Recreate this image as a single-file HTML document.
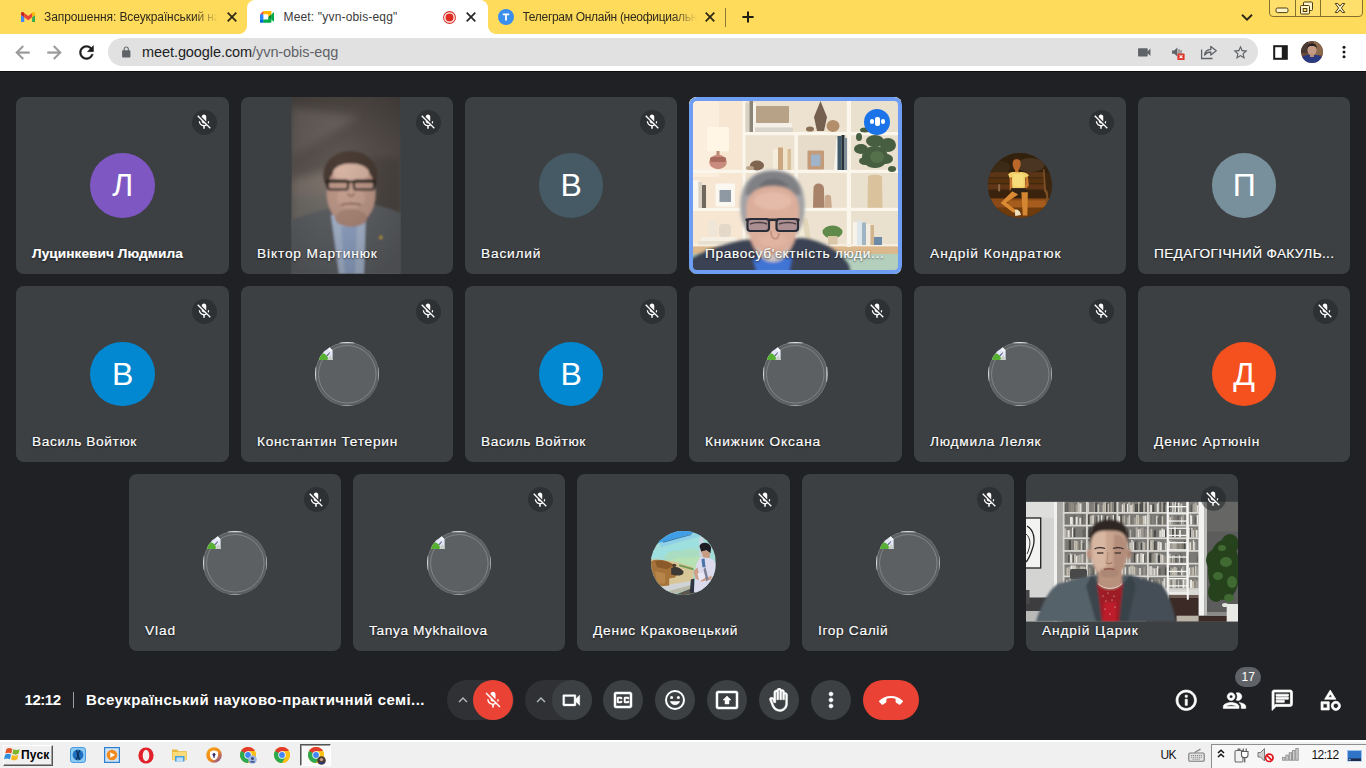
<!DOCTYPE html>
<html lang="uk">
<head>
<meta charset="utf-8">
<title>Meet: "yvn-obis-eqg"</title>
<style>
*{box-sizing:border-box;margin:0;padding:0}
html,body{width:1366px;height:768px;overflow:hidden;background:#202124;font-family:"Liberation Sans",sans-serif}
#root{position:relative;width:1366px;height:768px;overflow:hidden;background:#202124}
.abs{position:absolute}
svg{display:block}
/* browser chrome */
#tabstrip{position:absolute;left:0;top:0;width:1366px;height:34px;background:#ffdb5c}
#toolbar{position:absolute;left:0;top:34px;width:1366px;height:37px;background:#fff}
#tbline{position:absolute;left:0;top:70.500px;width:1366px;height:1.500px;background:#0e0f10}
.tabtxt{position:absolute;top:9px;height:16px;font-size:12px;color:#2e2a1c;white-space:nowrap;overflow:hidden;line-height:16px}
#activetab{position:absolute;left:247px;top:0;width:241px;height:34px;background:#fff;border-radius:8px 8px 0 0}
#activetab:before,#activetab:after{content:"";position:absolute;bottom:0;width:8px;height:8px}
#activetab:before{left:-8px;background:radial-gradient(circle at 0 0,rgba(255,255,255,0) 7.500px,#fff 8.200px)}
#activetab:after{right:-8px;background:radial-gradient(circle at 100% 0,rgba(255,255,255,0) 7.500px,#fff 8.200px)}
#urlbar{position:absolute;left:108px;top:38px;width:1150px;height:28px;border-radius:14px;background:#e1e1e1}
#url{position:absolute;left:142px;top:43px;font-size:14.500px;line-height:18px;color:#202124;white-space:nowrap}
#url span{color:#5f6368}
/* meet tiles */
.tile{position:absolute;width:212.330px;height:176.670px;background:#3c4043;border-radius:8px;overflow:hidden}
.tile.active{box-shadow:none}
.tile.active:after{content:"";position:absolute;left:0;top:0;right:0;bottom:0;border:4px solid #6e9ef3;border-radius:8px}
.name{position:absolute;left:16px;top:147.300px;font-size:13.700px;-webkit-text-stroke:.18px #fff;line-height:18px;color:#fff;white-space:nowrap;text-shadow:0 1px 2px rgba(0,0,0,.6),0 0 2px rgba(0,0,0,.3);z-index:3}
.mic{position:absolute;width:25px;height:25px;border-radius:12.500px;background:rgba(32,33,36,.5);z-index:3}
.mic svg{position:absolute;left:3.500px;top:3.500px;width:18px;height:18px}
.av{position:absolute;left:calc(50% - 32.100px);top:56.200px;width:64.600px;height:64.600px;border-radius:32.300px;color:#fff;font-size:32px;line-height:64.600px;text-align:center}
.ph,.pic{position:absolute;left:calc(50% - 32.100px);top:56.200px;width:64.600px;height:64.600px;border-radius:32.300px;overflow:hidden}
.ph svg,.pic svg{width:64.600px;height:64.600px}
.spk{position:absolute;right:12px;top:11.500px;width:26px;height:26px;border-radius:13px;background:#1a73e8;z-index:3}
.spk i{position:absolute;top:9.500px;width:4px;height:7px;border-radius:2px;background:#fff}
.spk i:nth-child(1){left:5.500px;top:10.500px;height:5px}
.spk i:nth-child(2){left:11px;top:8.500px;height:9px;width:4.500px}
.spk i:nth-child(3){left:17px;top:10.500px;height:5px}
/* bottom bar */
#clock,#mtitle{font-size:15px;line-height:20px;color:#fff;white-space:nowrap;font-weight:700}
/* taskbar */
#task{position:absolute;left:0;top:740px;width:1366px;height:28px;background:#f0f0f0}

</style>
</head>
<body>
<div id="root">
<!-- browser chrome -->

<div id="tabstrip"></div>
<div id="activetab"></div>
<div id="toolbar"></div>
<div id="tbline"></div>
<svg class="abs" style="left:20.800px;top:11.600px;width:14.400px;height:10.800px" viewBox="52 42 88 66">
<path fill="#4285f4" d="M58 108h14V74L52 59v43c0 3.320 2.690 6 6 6"/>
<path fill="#34a853" d="M120 108h14c3.320 0 6-2.690 6-6V59l-20 15"/>
<path fill="#fbbc04" d="M120 48v26l20-15v-8c0-7.420-8.470-11.650-14.400-7.200"/>
<path fill="#ea4335" d="M72 74V48l24 18 24-18v26L96 92"/>
<path fill="#c5221f" d="M52 51v8l20 15V48l-5.600-4.200c-5.940-4.450-14.400-.220-14.400 7.200"/>
</svg>
<div class="tabtxt" id="tab1" style="left:44px;width:174px;letter-spacing:-0.092px;-webkit-mask-image:linear-gradient(90deg,#000 150px,transparent 174px);mask-image:linear-gradient(90deg,#000 150px,transparent 174px)">Запрошення: Всеукраїнський науково</div>
<svg class="abs" style="left:226.4px;top:11px;width:12px;height:12px" viewBox="-6 -6 12 12"><path d="M-4.3 -4.3L4.3 4.3M4.3 -4.3L-4.3 4.3" stroke="#2b2616" stroke-width="1.7" fill="none"/></svg>
<svg class="abs" style="left:260px;top:11.200px;width:14.400px;height:11.800px" viewBox="0 0 87.500 72">
<path fill="#00832d" d="M49.500 36l8.530 9.750 11.470 7.330 2-17.020-2-16.640-11.690 6.440z"/>
<path fill="#0066da" d="M0 51.500V66c0 3.315 2.685 6 6 6h14.500l3-10.960-3-9.540-9.950-3z"/>
<path fill="#e94235" d="M20.500 0L0 20.500l10.550 3 9.950-3 2.950-9.410z"/>
<path fill="#2684fc" d="M20.500 20.500H0v31h20.500z"/>
<path fill="#00ac47" d="M82.600 8.680L69.500 19.420v33.660l13.160 10.790c1.970 1.540 4.850.135 4.850-2.370V11c0-2.535-2.945-3.925-4.910-2.320zM49.500 36v15.500h-29V72h43c3.315 0 6-2.685 6-6V53.080z"/>
<path fill="#ffba00" d="M63.500 0h-43v20.500h29V36l20-16.570V6c0-3.315-2.685-6-6-6z"/>
</svg>
<div class="tabtxt" id="tab2" style="left:283.500px;color:#3a3a3a;letter-spacing:0.170px;">Meet: "yvn-obis-eqg"</div>
<svg class="abs" style="left:442.800px;top:10.500px;width:13px;height:13px" viewBox="-6.500 -6.500 13 13"><circle r="5.900" fill="#fff" stroke="#d93025" stroke-width="1.100"/><circle r="4" fill="#e02a20"/></svg>
<svg class="abs" style="left:465.4px;top:11px;width:12px;height:12px" viewBox="-6 -6 12 12"><path d="M-4.3 -4.3L4.3 4.3M4.3 -4.3L-4.3 4.3" stroke="#262626" stroke-width="1.7" fill="none"/></svg>
<svg class="abs" style="left:498px;top:9px;width:16px;height:16px" viewBox="0 0 16 16"><circle cx="8" cy="8" r="8" fill="#3a8eed"/><path d="M4.800 4.600h6.400v1.700H8.900v5.300H7.100V6.300H4.800z" fill="#fff"/></svg>
<div class="tabtxt" id="tab3" style="left:522.500px;width:174px;letter-spacing:-0.300px;-webkit-mask-image:linear-gradient(90deg,#000 150px,transparent 174px);mask-image:linear-gradient(90deg,#000 150px,transparent 174px)">Телеграм Онлайн (неофициальный</div>
<svg class="abs" style="left:704px;top:11px;width:12px;height:12px" viewBox="-6 -6 12 12"><path d="M-4.3 -4.3L4.3 4.3M4.3 -4.3L-4.3 4.3" stroke="#2b2616" stroke-width="1.7" fill="none"/></svg>
<div class="abs" style="left:725px;top:8px;width:1px;height:19px;background:#8c7a3a"></div>
<svg class="abs" style="left:741px;top:10px;width:14px;height:14px" viewBox="-7 -7 14 14"><path d="M-5.600 0H5.600M0 -5.600V5.600" stroke="#1f1c12" stroke-width="2" fill="none"/></svg>
<svg class="abs" style="left:1240px;top:12px;width:14px;height:10px" viewBox="0 0 14 10"><path d="M2 2.800L7 7.600L12 2.800" stroke="#2b2616" stroke-width="1.900" fill="none"/></svg>
<!-- window controls -->
<div class="abs" style="left:1269px;top:-3px;width:93.500px;height:20px;border:1px solid #84702b;border-radius:0 0 4px 4px;background:#ffdf6b"></div>
<div class="abs" style="left:1294.500px;top:0;width:1px;height:16px;background:#84702b"></div>
<div class="abs" style="left:1319.500px;top:0;width:1px;height:16px;background:#84702b"></div>
<svg class="abs" style="left:1275px;top:7px;width:14px;height:7px" viewBox="0 0 14 7"><rect x="1" y="1" width="12" height="4.600" rx="1.600" fill="#fff4c8" stroke="#4a3e12" stroke-width="1"/></svg>
<svg class="abs" style="left:1299px;top:1px;width:15px;height:14px" viewBox="0 0 15 14"><rect x="4.500" y="1" width="9" height="8.500" rx="1" fill="#fff4c8" stroke="#4a3e12" stroke-width="1"/><rect x="1.500" y="4.500" width="9" height="8.500" rx="1" fill="#fff4c8" stroke="#4a3e12" stroke-width="1"/><rect x="4.200" y="7.500" width="3.600" height="3" fill="#ffdf6b" stroke="#4a3e12" stroke-width="1"/></svg>
<svg class="abs" style="left:1333px;top:2px;width:14px;height:12px" viewBox="0 0 14 12"><path d="M2.200 1.500h2.600L7 4.200 9.200 1.500h2.600L8.400 6l3.400 4.500H9.200L7 7.800 4.800 10.500H2.200L5.600 6z" fill="#fff4c8" stroke="#4a3e12" stroke-width="1" stroke-linejoin="round"/></svg>
<!-- toolbar -->
<svg class="abs" style="left:11.50px;top:41.50px;width:21px;height:21px" viewBox="0 0 24 24"><path fill="#9b9b9b" d="M20 11H7.83l5.59-5.59L12 4l-8 8 8 8 1.41-1.41L7.83 13H20v-2z" stroke="#9b9b9b" stroke-width=".5"/></svg>
<svg class="abs" style="left:43.500px;top:41.500px;width:21px;height:21px;transform:scaleX(-1)" viewBox="0 0 24 24"><path fill="#9b9b9b" stroke="#9b9b9b" stroke-width=".5" d="M20 11H7.83l5.59-5.59L12 4l-8 8 8 8 1.41-1.41L7.83 13H20v-2z"/></svg>
<svg class="abs" style="left:75.50px;top:41.50px;width:21px;height:21px" viewBox="0 0 24 24"><path fill="#1b1b1b" d="M17.65 6.35C16.2 4.9 14.21 4 12 4c-4.42 0-7.99 3.58-7.99 8s3.57 8 7.99 8c3.73 0 6.84-2.55 7.73-6h-2.080c-.82 2.330-3.040 4-5.650 4-3.310 0-6-2.690-6-6s2.690-6 6-6c1.660 0 3.140.690 4.220 1.780L13 11h7V4l-2.350 2.350z" stroke="#1b1b1b" stroke-width=".5"/></svg>
<div id="urlbar"></div>
<svg class="abs" style="left:120.45px;top:45.55px;width:12.5px;height:12.5px" viewBox="0 0 24 24"><path fill="#5f6368" d="M18 8h-1V6c0-2.760-2.240-5-5-5S7 3.240 7 6v2H6c-1.100 0-2 .9-2 2v10c0 1.100.9 2 2 2h12c1.100 0 2-.9 2-2V10c0-1.100-.9-2-2-2zM9 6c0-1.660 1.340-3 3-3s3 1.340 3 3v2H9V6z" /></svg>
<div id="url" style="letter-spacing:-0.077px;">meet.google.com<span>/yvn-obis-eqg</span></div>
<svg class="abs" style="left:1135.95px;top:43.95px;width:16.5px;height:16.5px" viewBox="0 0 24 24"><path fill="#5f6368" d="M17 10.5V7c0-.55-.45-1-1-1H4c-.55 0-1 .45-1 1v10c0 .55.45 1 1 1h12c.55 0 1-.45 1-1v-3.5l4 4v-11l-4 4z" /></svg>
<svg class="abs" style="left:1170px;top:44px;width:16px;height:17px" viewBox="0 0 16 17"><path d="M2 6.500h2.200L7.400 3.600v9L4.200 9.800H2z" fill="#5f6368"/><path d="M9 5.200v6.400M11 6v5" stroke="#5f6368" stroke-width="1" fill="none"/><rect x="7.400" y="9.600" width="7.200" height="6.400" rx=".6" fill="#e0382c"/><path d="M9.600 11.400l2.800 2.800M12.400 11.400l-2.800 2.800" stroke="#fff" stroke-width="1.100"/></svg>
<svg class="abs" style="left:1200px;top:44px;width:18px;height:16px" viewBox="0 0 18 16"><path d="M1.600 5.500V14.500H12.500" stroke="#5f6368" stroke-width="1.300" fill="none"/><path d="M4.500 11C5 7.400 7.600 5.600 10.800 5.400V2.400L16.300 6.700 10.800 11V8C8.400 8 6.200 8.800 4.500 11Z" stroke="#5f6368" stroke-width="1.300" fill="none" stroke-linejoin="round"/></svg>
<svg class="abs" style="left:1231.50px;top:43.50px;width:17px;height:17px" viewBox="0 0 24 24"><path fill="#5f6368" d="M22 9.24l-7.19-.62L12 2 9.19 8.63 2 9.240l5.460 4.730L5.820 21 12 17.270 18.180 21l-1.630-7.030L22 9.240zM12 15.400l-3.760 2.270 1-4.280-3.320-2.880 4.380-.380L12 6.100l1.710 4.040 4.380.380-3.320 2.880 1 4.280L12 15.400z" /></svg>
<svg class="abs" style="left:1272.500px;top:44.500px;width:15px;height:15px" viewBox="0 0 15 15"><rect x="1.200" y="1.200" width="12.600" height="12.600" fill="#fff" stroke="#1b1b1b" stroke-width="2"/><rect x="8.800" y="1" width="5.200" height="13" fill="#1b1b1b"/></svg>
<svg class="abs" style="left:1301px;top:41px;width:22px;height:22px" viewBox="0 0 22 22"><defs><clipPath id="pfc"><circle cx="11" cy="11" r="11"/></clipPath></defs><g clip-path="url(#pfc)"><rect width="22" height="22" fill="#6a4a3a"/><rect x="13" y="0" width="9" height="14" fill="#8a6a4a"/><rect x="0" y="0" width="7" height="12" fill="#4a3a34"/><path d="M0 22V17C3 14 7 13.500 11 13.500S19 14 22 17V22Z" fill="#2b3b82"/><ellipse cx="11" cy="9" rx="4.600" ry="5.600" fill="#c59b86"/><path d="M6.200 8C6 3.500 8.500 2.500 11 2.500S16 3.500 15.800 8C15 5.500 13.500 5 11 5S7 5.500 6.200 8Z" fill="#2a211e"/><rect x="9" y="13" width="4" height="3" fill="#b98f7a"/></g></svg>
<svg class="abs" style="left:1340px;top:44px;width:8px;height:16px" viewBox="0 0 8 16"><circle cx="4" cy="3.300" r="1.500" fill="#1b1b1b"/><circle cx="4" cy="8" r="1.500" fill="#1b1b1b"/><circle cx="4" cy="12.700" r="1.500" fill="#1b1b1b"/></svg>

<!-- tiles -->
<div class="tile " style="left:16px;top:97.00px;width:213px"><div class="av" style="background:#7e57c2;font-size:32px"><span style="position:relative;top:0px">Л</span></div><div class="mic" style="right:12.500px;top:12.9px"><svg viewBox="0 0 24 24"><path fill="#fff" d="M19 11h-1.7c0 .74-.16 1.43-.43 2.05l1.23 1.23c.56-.98.9-2.090.9-3.280zm-4.020.170c0-.060.020-.110.020-.170V5c0-1.660-1.340-3-3-3S9 3.340 9 5v.180l5.980 5.990zM4.270 3L3 4.270l6.010 6.010V11c0 1.660 1.330 3 2.990 3 .220 0 .440-.030.650-.080l1.660 1.660c-.710.330-1.500.520-2.310.520-2.760 0-5.300-2.100-5.300-5.100H5c0 3.410 2.720 6.230 6 6.720V21h2v-3.280c.910-.130 1.770-.450 2.540-.9L19.730 21 21 19.730 4.270 3z"/></svg></div><div class="name" id="n_r1c1" style="top:148px;letter-spacing:0.046px;font-weight:700;">Луцинкевич Людмила</div></div>
<div class="tile " style="left:241px;top:97.00px;width:212px"><svg class="abs" style="left:-.800px;top:0" width="212.330" height="176.670" viewBox="0 0 212.330 176.670">
<defs>
<filter id="bl1" x="-10%" y="-10%" width="120%" height="120%"><feGaussianBlur stdDeviation="1.100"/></filter>
<filter id="bl1b" x="-10%" y="-10%" width="120%" height="120%"><feGaussianBlur stdDeviation="4"/></filter>
<clipPath id="cpv"><rect x="51.600" y="0" width="108.800" height="176.670"/></clipPath>
<linearGradient id="vbg" x1="0" y1="0" x2="0" y2="1"><stop offset="0" stop-color="#4f4945"/><stop offset=".45" stop-color="#625a55"/><stop offset="1" stop-color="#6a625d"/></linearGradient>
<radialGradient id="vvig" cx=".45" cy=".35" r=".75"><stop offset="0" stop-color="#000" stop-opacity="0"/><stop offset="1" stop-color="#000" stop-opacity=".25"/></radialGradient>
</defs>
<g clip-path="url(#cpv)">
<rect x="51.600" y="0" width="108.800" height="176.670" fill="url(#vbg)"/>
<g filter="url(#bl1b)">
<path d="M51 83 L100 70 L100 130 L51 130 Z" fill="#82776f"/>
<path d="M51 60 L120 20 L51 10 Z" fill="#6b635e"/>
<rect x="51" y="98" width="42" height="26" fill="#77736e"/>
<rect x="130" y="60" width="32" height="60" fill="#514b47"/>
</g>
<g filter="url(#bl1)">
<path d="M51 123 C62 119 78 114 90 111 L96 108 L128 106 C140 109 152 112 161 116 L161 177 L51 177 Z" fill="#64666b"/>
<path d="M91 118 L126 114 L124 177 L99 177 Z" fill="#b1c1da"/>
<path d="M101 130 L117 128 L115 177 L105 177 Z" fill="#98add0"/>
<ellipse cx="110.400" cy="78" rx="27" ry="24" fill="#4b3c36"/>
<ellipse cx="111.200" cy="97" rx="24.600" ry="31" fill="#c49d8d"/><ellipse cx="111" cy="76" rx="18" ry="9.500" fill="#dab6a5"/><ellipse cx="111" cy="101" rx="14" ry="11" fill="#cfa797"/>
<ellipse cx="111" cy="121" rx="16" ry="9" fill="#b48e7e"/>
<path d="M85 72 C90 57 132 55 137 74 C128 65 96 64 85 72 Z" fill="#4b3c36"/>
<rect x="85" y="83.500" width="51" height="2.400" fill="#2b2624"/>
<rect x="88" y="83.500" width="20" height="9" rx="2" fill="none" stroke="#2b2624" stroke-width="2.200"/>
<rect x="114" y="83.500" width="20" height="9" rx="2" fill="none" stroke="#2b2624" stroke-width="2.200"/>
<path d="M101 108 C106 106 116 106 121 108" stroke="#7d5a50" stroke-width="1.600" fill="none"/>
<path d="M108 96 C108 100 114 100 114 96" stroke="#94705f" stroke-width="1.400" fill="none"/>
<rect x="139.500" y="139" width="2.600" height="3" fill="#d8b531"/>
</g>
<rect x="51.600" y="0" width="108.800" height="176.670" fill="url(#vvig)"/>
</g>
</svg><div class="mic" style="right:12.500px;top:12.9px"><svg viewBox="0 0 24 24"><path fill="#fff" d="M19 11h-1.7c0 .74-.16 1.43-.43 2.05l1.23 1.23c.56-.98.9-2.090.9-3.280zm-4.020.170c0-.060.020-.110.020-.170V5c0-1.660-1.340-3-3-3S9 3.340 9 5v.180l5.980 5.990zM4.270 3L3 4.270l6.010 6.010V11c0 1.660 1.330 3 2.990 3 .220 0 .440-.030.650-.080l1.660 1.660c-.710.330-1.500.520-2.310.520-2.760 0-5.300-2.100-5.300-5.100H5c0 3.410 2.720 6.230 6 6.720V21h2v-3.280c.910-.130 1.770-.450 2.540-.9L19.730 21 21 19.730 4.270 3z"/></svg></div><div class="name" id="n_r1c2" style="top:148px;letter-spacing:0.866px;">Віктор Мартинюк</div></div>
<div class="tile " style="left:465px;top:97.00px;width:212px"><div class="av" style="background:#455a64;font-size:32px"><span style="position:relative;top:0px">В</span></div><div class="mic" style="right:12.500px;top:12.9px"><svg viewBox="0 0 24 24"><path fill="#fff" d="M19 11h-1.7c0 .74-.16 1.43-.43 2.05l1.23 1.23c.56-.98.9-2.090.9-3.280zm-4.020.170c0-.060.020-.110.020-.170V5c0-1.660-1.340-3-3-3S9 3.340 9 5v.180l5.980 5.990zM4.270 3L3 4.270l6.010 6.010V11c0 1.660 1.330 3 2.990 3 .220 0 .440-.030.650-.080l1.660 1.660c-.710.330-1.500.520-2.310.520-2.760 0-5.300-2.100-5.300-5.100H5c0 3.410 2.720 6.230 6 6.720V21h2v-3.280c.910-.130 1.770-.450 2.540-.9L19.730 21 21 19.730 4.270 3z"/></svg></div><div class="name" id="n_r1c3" style="top:148px;letter-spacing:0.831px;">Василий</div></div>
<div class="tile active" style="left:689px;top:97.00px;width:213px"><svg class="abs" style="left:0;top:0" width="212.330" height="176.670" viewBox="0 0 212.330 176.670">
<defs>
<filter id="bl2" x="-10%" y="-10%" width="120%" height="120%"><feGaussianBlur stdDeviation=".7"/></filter>
<filter id="bl2b" x="-10%" y="-10%" width="120%" height="120%"><feGaussianBlur stdDeviation="1.500"/></filter>
</defs>
<rect width="212.330" height="176.670" fill="#eee3d0"/>
<g filter="url(#bl2)">
<rect x="0" y="0" width="55" height="177" fill="#f6e6d2"/>
<rect x="0" y="0" width="30" height="80" fill="#fbeedd"/>
<!-- shelf unit back panels -->
<rect x="55" y="0" width="157" height="150" fill="#ece2cf"/>
<rect x="108" y="38" width="50" height="36" fill="#e6dcc9"/>
<rect x="160" y="0" width="52" height="150" fill="#eae0ce"/>
<!-- bottom cabinet -->
<rect x="0" y="148.500" width="212" height="9" fill="#dcb88d"/>
<rect x="0" y="157" width="212" height="20" fill="#a8c5b1"/>
<rect x="150" y="157" width="62" height="20" fill="#b5cfbd"/>
<!-- verticals -->
<rect x="53.500" y="0" width="3" height="150" fill="#fbf6ec"/>
<rect x="105.500" y="36" width="3.400" height="114" fill="#fbf6ec"/>
<rect x="157.800" y="0" width="4.200" height="150" fill="#fbf6ec"/>
<!-- horizontals -->
<rect x="55" y="35" width="157" height="3.200" fill="#fbf6ec"/>
<rect x="0" y="72.800" width="212" height="3.200" fill="#fbf6ec"/>
<rect x="0" y="110.800" width="212" height="3.200" fill="#fbf6ec"/>
<rect x="0" y="147" width="212" height="2.400" fill="#f6eedf"/>
<!-- lamp -->
<rect x="18" y="30" width="22" height="24.500" rx="2" fill="#fff6e6"/>
<rect x="27.500" y="54" width="3" height="5" fill="#b98a70"/>
<ellipse cx="29" cy="65" rx="8.800" ry="7.200" fill="#c98b7c"/>
<rect x="21" y="60" width="16" height="5" rx="2" fill="#a86a5c"/>
<!-- top shelf objects -->
<rect x="56.500" y="6" width="4" height="29" fill="#d9d2c4"/>
<rect x="60.500" y="4" width="3.500" height="31" fill="#8b8579"/>
<rect x="64" y="6" width="3" height="29" fill="#f7f3ea"/>
<rect x="67" y="9" width="33" height="17" rx="1" fill="#b7a287"/>
<rect x="66" y="26" width="37" height="4.500" fill="#f4f0e8"/>
<rect x="66" y="30.500" width="38" height="4.500" fill="#d9d4ca"/>
<path d="M131.500 4 L138 20 L135 34 L128 34 L125 20 Z" fill="#75604f"/>
<ellipse cx="144" cy="29" rx="6.500" ry="6" fill="#b38e6b"/>
<ellipse cx="121" cy="32" rx="4" ry="2.600" fill="#8b6f58"/>
<!-- second shelf objects -->
<ellipse cx="68" cy="68.500" rx="7" ry="5" fill="#7f6550"/>
<ellipse cx="61" cy="71" rx="4" ry="2" fill="#b9a287"/>
<rect x="84" y="52" width="5" height="21" fill="#f4ecdc"/>
<rect x="89" y="50.500" width="5" height="22.500" fill="#caa77f"/>
<rect x="94" y="50" width="4.500" height="23" fill="#efe3cc"/>
<rect x="98.500" y="52" width="3.500" height="21" fill="#d9bf97"/>
<rect x="118.500" y="53.500" width="16.500" height="19" rx="1" fill="#c39a7a"/>
<rect x="122" y="57.500" width="9.500" height="11.500" fill="#9fb4c8"/>
<rect x="145" y="42" width="3.500" height="31" fill="#f7f4ee" transform="rotate(4 146 73)"/>
<rect x="148.500" y="39" width="4" height="34" fill="#3f5968"/>
<rect x="152.500" y="38" width="3" height="35" fill="#25303a"/>
<rect x="155.500" y="41" width="2.600" height="32" fill="#7f8f99"/>
<!-- big plant -->
<g fill="#465f3f">
<ellipse cx="186" cy="60" rx="13" ry="11"/><ellipse cx="176" cy="64" rx="6" ry="4"/><ellipse cx="197" cy="62" rx="7" ry="5"/>
<ellipse cx="172" cy="52" rx="7" ry="5"/>
<ellipse cx="199" cy="48" rx="8" ry="7"/>
<ellipse cx="186" cy="44" rx="9" ry="6"/>
<ellipse cx="203" cy="72" rx="4" ry="3"/>
<ellipse cx="170" cy="40" rx="3" ry="4"/>
<ellipse cx="176" cy="33" rx="5" ry="2.500"/>
</g>
<ellipse cx="188" cy="60" rx="7" ry="6" fill="#55714b"/>
<path d="M179 80 C179 77 193 77 193 80 L193.500 110.800 L178.500 110.800 Z" fill="#d9c29c"/>
<!-- third shelf -->
<rect x="4" y="83" width="5.500" height="28" fill="#f9f6ef"/>
<rect x="9.500" y="85" width="3.500" height="26" fill="#dad3c5"/>
<rect x="13" y="88" width="4" height="23" fill="#6f675e"/>
<rect x="26.500" y="86.500" width="19.500" height="23" rx="1" fill="#fbf8f1"/>
<rect x="30.500" y="93" width="11.500" height="12" fill="#8f99a4"/>
<path d="M124.500 92 C124.500 88 127 86.500 129.500 86.500 C132 86.500 135 88 135 92 L135.500 110.800 L124 110.800 Z" fill="#a9826a"/>
<path d="M136 100 C136 97 142 97 142 100 L142.800 110.800 L135.600 110.800 Z" fill="#c9a88c"/>
<!-- bottom shelf -->
<rect x="19" y="124" width="10" height="16" rx="4" fill="#efe6d8"/>
<rect x="30" y="127" width="12" height="13" rx="4" fill="#e4d9c8"/>
<rect x="12" y="140" width="36" height="4" fill="#f5efe4"/>
<rect x="9" y="144" width="40" height="3.500" fill="#e7dfd0"/>
<rect x="112" y="119" width="5" height="29" fill="#f3ecd9" transform="rotate(-12 114 148)"/>
<rect x="118" y="121" width="5" height="27" fill="#e2d6ba" transform="rotate(-10 120 148)"/>
<ellipse cx="143.500" cy="135" rx="10" ry="6.500" fill="#5e8a48"/>
<rect x="139" y="139" width="9.500" height="8.500" fill="#d9c7a8"/>
<rect x="164" y="125" width="4" height="23" fill="#f7f3ea"/>
<rect x="168" y="123.500" width="5" height="24.500" fill="#dfe7ea"/>
<rect x="173" y="125.500" width="4" height="22.500" fill="#9fb5c4"/>
<rect x="177" y="127" width="4.500" height="21" fill="#f3ecdf"/>
<rect x="181.500" y="128" width="3.500" height="20" fill="#d2b58e"/>
<rect x="185" y="140" width="8" height="8" fill="#6d8aa6"/>
</g>
<!-- person -->
<g filter="url(#bl2b)">
<path d="M0 177 L0 163 C12 155 34 147 54 143 L114 141 C134 144 150 153 160 168 L162 177 Z" fill="#3b4252"/>
<path d="M64 162 L103 160 L100 177 L68 177 Z" fill="#3f74d6"/>
<path d="M52 118 C48 88 62 73 84 73 C106 73 119 88 115 118 C114 128 110 134 108 138 L60 138 C56 132 53 126 52 118 Z" fill="#a3a3a6"/>
<path d="M56 98 C58 80 70 74.500 84 74.500 C98 74.500 110 80 112 98 Z" fill="#808185"/><path d="M70 90 C74 80 92 78 100 90 Z" fill="#6c6d72"/>
<path d="M57.500 116 C56 98 66 89 84 89 C102 89 111 98 110 116 C110 142 100 163 84 164 C68 164 57.500 142 57.500 116 Z" fill="#dbae9b"/>
<ellipse cx="84" cy="104" rx="19" ry="9" fill="#e4baa8"/><ellipse cx="84" cy="143" rx="14" ry="7" fill="#e0b3a2"/>
<path d="M68 150 C76 161 92 161 100 150 C98 170 70 170 68 150 Z" fill="#cbc3be"/>
</g>
<g filter="url(#bl2)">
<rect x="56.500" y="121.500" width="54" height="2.600" fill="#2a2c33"/>
<rect x="58.500" y="122" width="21.500" height="12" rx="3" fill="#ab8f92" stroke="#2b2d39" stroke-width="2.200"/>
<rect x="87.500" y="122" width="21.500" height="12" rx="3" fill="#ab8f92" stroke="#2b2d39" stroke-width="2.200"/>
<path d="M61 127 C66 125 74 125 78 127 M90 127 C95 125 103 125 107 127" stroke="#4a3e40" stroke-width="1.600" fill="none"/>
<path d="M82 134 C82 144 90 144 90 136" stroke="#c4907c" stroke-width="1.600" fill="none"/>
</g>
</svg><div class="spk"><i></i><i></i><i></i></div><div class="name" id="n_r1c4" style="top:148px;letter-spacing:0.649px;">Правосуб'єктність люди...</div></div>
<div class="tile " style="left:914px;top:97.00px;width:212px"><div class="pic"><svg width="64" height="64" viewBox="0 0 64 64">
<defs><filter id="bl3"><feGaussianBlur stdDeviation=".6"/></filter></defs>
<rect width="64" height="64" fill="#3d2610"/>
<g filter="url(#bl3)">
<rect x="0" y="0" width="64" height="20" fill="#33200f"/>
<ellipse cx="42" cy="12" rx="14" ry="7" fill="#4a3420"/>
<ellipse cx="12" cy="14" rx="10" ry="6" fill="#3a2a18"/>
<rect x="0" y="19" width="56" height="5" fill="#5b3414"/>
<rect x="0" y="25" width="56" height="5" fill="#54300f"/>
<rect x="0" y="31" width="56" height="5" fill="#5f3514"/>
<rect x="0" y="37" width="58" height="8" fill="#3b230d"/>
<rect x="0" y="45" width="64" height="19" fill="#8a4a14"/>
<rect x="20" y="47" width="44" height="10" fill="#a55c1c"/>
<rect x="0" y="54" width="64" height="10" fill="#6e3a10"/>
<path d="M54.500 16 L56 16 L57.500 36 C60 38 60 44 59 50 L57 50 C58 44 58 40 55.500 38 Z" fill="#7a4e26"/>
<rect x="10" y="31" width="2" height="7" fill="#8a6a48"/>
<!-- person -->
<ellipse cx="28.400" cy="11" rx="4" ry="6.200" fill="#b9682a"/>
<path d="M24.500 8 C24.500 3 32.500 3 32.500 8 C31 5.500 26 5.500 24.500 8 Z" fill="#3a2412"/>
<rect x="26.800" y="16" width="3.400" height="4" fill="#c2702a"/>
<path d="M20 21 C22 18.500 26 18.500 27 19 L31 19 C34 18.500 38 19 40.500 22 L38.500 25 L37 24 L36.500 35 L24 35 L23.500 24 L21.500 25 Z" fill="#f2d06a"/>
<path d="M25 21 L35 21 L35 33 L25 33 Z" fill="#f7dc7c"/>
<path d="M37.500 24 L39.500 23 L40.500 32 L37.500 36 L36.500 35 Z" fill="#c87a30"/>
<path d="M21.500 25 L23.500 24 L24 34 L21.500 38 Z" fill="#c87a30"/>
<path d="M23 35 L38 35 L39 43 L22 44 Z" fill="#2f2112"/>
<path d="M24 38 L30 41 L18 49 L28 57 L25.500 59.500 L12.500 49.500 Z" fill="#d98a32"/>
<path d="M33 39 L39.500 39 L39 62 L34.500 62 Z" fill="#d58630"/>
<path d="M26.500 56.500 C29 55 32.500 58 32.500 61.500 L27 62.500 Z" fill="#f0e0c0"/>
</g>
</svg></div><div class="mic" style="right:12.500px;top:12.9px"><svg viewBox="0 0 24 24"><path fill="#fff" d="M19 11h-1.7c0 .74-.16 1.43-.43 2.05l1.23 1.23c.56-.98.9-2.090.9-3.280zm-4.020.170c0-.060.020-.110.020-.170V5c0-1.660-1.340-3-3-3S9 3.340 9 5v.180l5.980 5.990zM4.270 3L3 4.270l6.010 6.010V11c0 1.660 1.330 3 2.990 3 .220 0 .440-.030.650-.080l1.660 1.660c-.710.330-1.500.520-2.310.520-2.760 0-5.300-2.100-5.300-5.100H5c0 3.410 2.720 6.230 6 6.720V21h2v-3.280c.910-.130 1.770-.450 2.540-.9L19.730 21 21 19.730 4.270 3z"/></svg></div><div class="name" id="n_r1c5" style="top:148px;letter-spacing:1.003px;">Андрій Кондратюк</div></div>
<div class="tile " style="left:1138px;top:97.00px;width:212px"><div class="av" style="background:#78909c;font-size:32px"><span style="position:relative;top:0px">П</span></div><div class="name" id="n_r1c6" style="top:148px;letter-spacing:0.317px;">ПЕДАГОГІЧНИЙ ФАКУЛЬ...</div></div>
<div class="tile " style="left:16px;top:285.67px;width:213px"><div class="av" style="background:#0288d1;font-size:32px"><span style="position:relative;top:0px">В</span></div><div class="mic" style="right:12.500px;top:12.9px"><svg viewBox="0 0 24 24"><path fill="#fff" d="M19 11h-1.7c0 .74-.16 1.43-.43 2.05l1.23 1.23c.56-.98.9-2.090.9-3.280zm-4.020.170c0-.060.020-.110.020-.170V5c0-1.660-1.340-3-3-3S9 3.340 9 5v.180l5.980 5.990zM4.270 3L3 4.270l6.010 6.010V11c0 1.660 1.330 3 2.990 3 .220 0 .440-.030.650-.080l1.660 1.660c-.710.330-1.500.520-2.310.520-2.760 0-5.300-2.100-5.300-5.100H5c0 3.410 2.720 6.230 6 6.720V21h2v-3.280c.910-.130 1.770-.450 2.540-.9L19.730 21 21 19.730 4.270 3z"/></svg></div><div class="name" id="n_r2c1" style="top:147.33px;letter-spacing:0.603px;">Василь Войтюк</div></div>
<div class="tile " style="left:241px;top:285.67px;width:212px"><div class="ph"><svg viewBox="0 0 64 64" width="64" height="64">
<circle cx="32" cy="32" r="32" fill="#5d6063"/>
<circle cx="32" cy="32" r="31.6" fill="none" stroke="#777a7d" stroke-width="0.9"/>
<path d="M25 0.6 H39 M25 63.4 H39 M0.600 25 V39 M63.400 25 V39" stroke="#dfe0e1" stroke-width="1.100" fill="none" stroke-linecap="round"/>
<circle cx="32" cy="32" r="28.5" fill="none" stroke="#85888b" stroke-width="0.9"/>
<g transform="translate(4.300,4.600) scale(.94)">
<path d="M0 0 H10 L14 4 V14 H0 Z" fill="#e4e8f6"/>
<path d="M10 0 L14 4 H10 Z" fill="#fff"/>
<path d="M0 14 V9.500 C2 6.500 5 6.500 7.500 9 L10.500 14 Z" fill="#57b033"/>
<path d="M8.200 14 L11.300 8.500 L14 13 V14 Z" fill="#c9cfc9"/>
<path d="M7.600 9.200 L10.800 5.800 L11.400 6.400 L8.500 10 Z" fill="#5b5a8a"/>
</g></svg></div><div class="mic" style="right:12.500px;top:12.9px"><svg viewBox="0 0 24 24"><path fill="#fff" d="M19 11h-1.7c0 .74-.16 1.43-.43 2.05l1.23 1.23c.56-.98.9-2.090.9-3.280zm-4.020.170c0-.060.020-.110.020-.170V5c0-1.660-1.340-3-3-3S9 3.340 9 5v.180l5.980 5.990zM4.270 3L3 4.270l6.010 6.010V11c0 1.660 1.330 3 2.990 3 .220 0 .440-.030.650-.080l1.660 1.660c-.710.330-1.500.520-2.310.520-2.760 0-5.300-2.100-5.300-5.100H5c0 3.410 2.720 6.230 6 6.720V21h2v-3.280c.910-.130 1.770-.450 2.540-.9L19.730 21 21 19.730 4.270 3z"/></svg></div><div class="name" id="n_r2c2" style="top:147.33px;letter-spacing:0.726px;">Константин Тетерин</div></div>
<div class="tile " style="left:465px;top:285.67px;width:212px"><div class="av" style="background:#0288d1;font-size:32px"><span style="position:relative;top:0px">В</span></div><div class="mic" style="right:12.500px;top:12.9px"><svg viewBox="0 0 24 24"><path fill="#fff" d="M19 11h-1.7c0 .74-.16 1.43-.43 2.05l1.23 1.23c.56-.98.9-2.090.9-3.280zm-4.020.170c0-.060.020-.110.020-.170V5c0-1.660-1.340-3-3-3S9 3.340 9 5v.180l5.980 5.990zM4.270 3L3 4.270l6.010 6.010V11c0 1.660 1.330 3 2.990 3 .220 0 .440-.030.650-.080l1.660 1.660c-.710.330-1.500.520-2.310.520-2.760 0-5.300-2.100-5.300-5.100H5c0 3.410 2.720 6.230 6 6.720V21h2v-3.280c.910-.130 1.770-.450 2.540-.9L19.730 21 21 19.730 4.270 3z"/></svg></div><div class="name" id="n_r2c3" style="top:147.33px;letter-spacing:0.603px;">Василь Войтюк</div></div>
<div class="tile " style="left:689px;top:285.67px;width:213px"><div class="ph"><svg viewBox="0 0 64 64" width="64" height="64">
<circle cx="32" cy="32" r="32" fill="#5d6063"/>
<circle cx="32" cy="32" r="31.6" fill="none" stroke="#777a7d" stroke-width="0.9"/>
<path d="M25 0.6 H39 M25 63.4 H39 M0.600 25 V39 M63.400 25 V39" stroke="#dfe0e1" stroke-width="1.100" fill="none" stroke-linecap="round"/>
<circle cx="32" cy="32" r="28.5" fill="none" stroke="#85888b" stroke-width="0.9"/>
<g transform="translate(4.300,4.600) scale(.94)">
<path d="M0 0 H10 L14 4 V14 H0 Z" fill="#e4e8f6"/>
<path d="M10 0 L14 4 H10 Z" fill="#fff"/>
<path d="M0 14 V9.500 C2 6.500 5 6.500 7.500 9 L10.500 14 Z" fill="#57b033"/>
<path d="M8.200 14 L11.300 8.500 L14 13 V14 Z" fill="#c9cfc9"/>
<path d="M7.600 9.200 L10.800 5.800 L11.400 6.400 L8.500 10 Z" fill="#5b5a8a"/>
</g></svg></div><div class="mic" style="right:12.500px;top:12.9px"><svg viewBox="0 0 24 24"><path fill="#fff" d="M19 11h-1.7c0 .74-.16 1.43-.43 2.05l1.23 1.23c.56-.98.9-2.090.9-3.280zm-4.020.170c0-.060.020-.110.020-.170V5c0-1.660-1.340-3-3-3S9 3.340 9 5v.180l5.980 5.990zM4.270 3L3 4.270l6.010 6.010V11c0 1.660 1.330 3 2.990 3 .220 0 .440-.030.650-.080l1.660 1.660c-.710.330-1.500.520-2.310.520-2.760 0-5.300-2.100-5.300-5.100H5c0 3.410 2.720 6.230 6 6.720V21h2v-3.280c.910-.130 1.770-.450 2.540-.9L19.730 21 21 19.730 4.270 3z"/></svg></div><div class="name" id="n_r2c4" style="top:147.33px;letter-spacing:0.881px;">Книжник Оксана</div></div>
<div class="tile " style="left:914px;top:285.67px;width:212px"><div class="ph"><svg viewBox="0 0 64 64" width="64" height="64">
<circle cx="32" cy="32" r="32" fill="#5d6063"/>
<circle cx="32" cy="32" r="31.6" fill="none" stroke="#777a7d" stroke-width="0.9"/>
<path d="M25 0.6 H39 M25 63.4 H39 M0.600 25 V39 M63.400 25 V39" stroke="#dfe0e1" stroke-width="1.100" fill="none" stroke-linecap="round"/>
<circle cx="32" cy="32" r="28.5" fill="none" stroke="#85888b" stroke-width="0.9"/>
<g transform="translate(4.300,4.600) scale(.94)">
<path d="M0 0 H10 L14 4 V14 H0 Z" fill="#e4e8f6"/>
<path d="M10 0 L14 4 H10 Z" fill="#fff"/>
<path d="M0 14 V9.500 C2 6.500 5 6.500 7.500 9 L10.500 14 Z" fill="#57b033"/>
<path d="M8.200 14 L11.300 8.500 L14 13 V14 Z" fill="#c9cfc9"/>
<path d="M7.600 9.200 L10.800 5.800 L11.400 6.400 L8.500 10 Z" fill="#5b5a8a"/>
</g></svg></div><div class="mic" style="right:12.500px;top:12.9px"><svg viewBox="0 0 24 24"><path fill="#fff" d="M19 11h-1.7c0 .74-.16 1.43-.43 2.05l1.23 1.23c.56-.98.9-2.090.9-3.280zm-4.020.170c0-.060.020-.110.020-.170V5c0-1.660-1.340-3-3-3S9 3.340 9 5v.180l5.980 5.990zM4.270 3L3 4.270l6.010 6.010V11c0 1.660 1.330 3 2.990 3 .220 0 .440-.030.650-.080l1.660 1.660c-.710.330-1.500.520-2.310.520-2.760 0-5.300-2.100-5.300-5.100H5c0 3.410 2.720 6.230 6 6.720V21h2v-3.280c.910-.130 1.770-.450 2.540-.9L19.730 21 21 19.730 4.270 3z"/></svg></div><div class="name" id="n_r2c5" style="top:147.33px;letter-spacing:0.807px;">Людмила Леляк</div></div>
<div class="tile " style="left:1138px;top:285.67px;width:212px"><div class="av" style="background:#f4511e;font-size:32px"><span style="position:relative;top:0px">Д</span></div><div class="mic" style="right:12.500px;top:12.9px"><svg viewBox="0 0 24 24"><path fill="#fff" d="M19 11h-1.7c0 .74-.16 1.43-.43 2.05l1.23 1.23c.56-.98.9-2.090.9-3.280zm-4.020.170c0-.060.020-.110.020-.170V5c0-1.660-1.340-3-3-3S9 3.340 9 5v.180l5.980 5.990zM4.270 3L3 4.270l6.010 6.010V11c0 1.660 1.330 3 2.990 3 .220 0 .440-.030.650-.080l1.660 1.660c-.710.330-1.500.520-2.310.520-2.760 0-5.300-2.100-5.300-5.100H5c0 3.410 2.720 6.230 6 6.720V21h2v-3.280c.910-.130 1.770-.450 2.540-.9L19.730 21 21 19.730 4.270 3z"/></svg></div><div class="name" id="n_r2c6" style="top:147.33px;letter-spacing:0.960px;">Денис Артюнін</div></div>
<div class="tile " style="left:129px;top:474.34px;width:212px"><div class="ph"><svg viewBox="0 0 64 64" width="64" height="64">
<circle cx="32" cy="32" r="32" fill="#5d6063"/>
<circle cx="32" cy="32" r="31.6" fill="none" stroke="#777a7d" stroke-width="0.9"/>
<path d="M25 0.6 H39 M25 63.4 H39 M0.600 25 V39 M63.400 25 V39" stroke="#dfe0e1" stroke-width="1.100" fill="none" stroke-linecap="round"/>
<circle cx="32" cy="32" r="28.5" fill="none" stroke="#85888b" stroke-width="0.9"/>
<g transform="translate(4.300,4.600) scale(.94)">
<path d="M0 0 H10 L14 4 V14 H0 Z" fill="#e4e8f6"/>
<path d="M10 0 L14 4 H10 Z" fill="#fff"/>
<path d="M0 14 V9.500 C2 6.500 5 6.500 7.500 9 L10.500 14 Z" fill="#57b033"/>
<path d="M8.200 14 L11.300 8.500 L14 13 V14 Z" fill="#c9cfc9"/>
<path d="M7.600 9.200 L10.800 5.800 L11.400 6.400 L8.500 10 Z" fill="#5b5a8a"/>
</g></svg></div><div class="mic" style="right:12.500px;top:12.9px"><svg viewBox="0 0 24 24"><path fill="#fff" d="M19 11h-1.7c0 .74-.16 1.43-.43 2.05l1.23 1.23c.56-.98.9-2.090.9-3.280zm-4.020.170c0-.060.020-.110.020-.170V5c0-1.660-1.340-3-3-3S9 3.340 9 5v.180l5.980 5.990zM4.270 3L3 4.270l6.010 6.010V11c0 1.660 1.330 3 2.990 3 .220 0 .440-.030.650-.080l1.660 1.660c-.710.330-1.500.520-2.310.520-2.760 0-5.300-2.100-5.300-5.100H5c0 3.410 2.720 6.230 6 6.720V21h2v-3.280c.910-.130 1.770-.450 2.540-.9L19.730 21 21 19.730 4.270 3z"/></svg></div><div class="name" id="n_r3c1" style="top:147.67px;letter-spacing:0.931px;">Vlad</div></div>
<div class="tile " style="left:353px;top:474.34px;width:212px"><div class="ph"><svg viewBox="0 0 64 64" width="64" height="64">
<circle cx="32" cy="32" r="32" fill="#5d6063"/>
<circle cx="32" cy="32" r="31.6" fill="none" stroke="#777a7d" stroke-width="0.9"/>
<path d="M25 0.6 H39 M25 63.4 H39 M0.600 25 V39 M63.400 25 V39" stroke="#dfe0e1" stroke-width="1.100" fill="none" stroke-linecap="round"/>
<circle cx="32" cy="32" r="28.5" fill="none" stroke="#85888b" stroke-width="0.9"/>
<g transform="translate(4.300,4.600) scale(.94)">
<path d="M0 0 H10 L14 4 V14 H0 Z" fill="#e4e8f6"/>
<path d="M10 0 L14 4 H10 Z" fill="#fff"/>
<path d="M0 14 V9.500 C2 6.500 5 6.500 7.500 9 L10.500 14 Z" fill="#57b033"/>
<path d="M8.200 14 L11.300 8.500 L14 13 V14 Z" fill="#c9cfc9"/>
<path d="M7.600 9.200 L10.800 5.800 L11.400 6.400 L8.500 10 Z" fill="#5b5a8a"/>
</g></svg></div><div class="mic" style="right:12.500px;top:12.9px"><svg viewBox="0 0 24 24"><path fill="#fff" d="M19 11h-1.7c0 .74-.16 1.43-.43 2.05l1.23 1.23c.56-.98.9-2.090.9-3.280zm-4.020.170c0-.060.020-.110.020-.170V5c0-1.660-1.340-3-3-3S9 3.340 9 5v.180l5.980 5.990zM4.270 3L3 4.270l6.010 6.010V11c0 1.660 1.330 3 2.990 3 .220 0 .440-.030.650-.080l1.660 1.660c-.710.330-1.500.520-2.310.520-2.760 0-5.300-2.100-5.300-5.100H5c0 3.410 2.720 6.230 6 6.720V21h2v-3.280c.910-.130 1.770-.450 2.540-.9L19.730 21 21 19.730 4.270 3z"/></svg></div><div class="name" id="n_r3c2" style="top:147.67px;letter-spacing:0.620px;">Tanya Mykhailova</div></div>
<div class="tile " style="left:577px;top:474.34px;width:213px"><div class="pic"><svg width="64" height="64" viewBox="0 0 64 64">
<defs><filter id="bl4"><feGaussianBlur stdDeviation=".5"/></filter></defs>
<rect width="64" height="64" fill="#a4ddd8"/>
<g filter="url(#bl4)">
<path d="M0 14 L50 0 L0 0 Z" fill="#3f9ee6"/>
<path d="M8 12 L52 1 L53 4 L10 16 Z" fill="#8fd1e6"/>
<path d="M12 11 L40 3.500" stroke="#3a7fb8" stroke-width="1.200"/>
<path d="M0 20 L50 6 L50 14 L0 28 Z" fill="#9edfe0"/>
<path d="M14 24 C22 16 28 22 34 18 C40 16 44 20 50 20 L50 34 L14 34 Z" fill="#a9dcc0"/>
<path d="M18 30 C26 24 34 28 50 25 L50 38 L18 38 Z" fill="#b5e1b4"/>
<path d="M0 28 L22 30 L42 36 L42 50 L8 56 L0 50 Z" fill="#d7c697"/>
<path d="M28 33 L42 37 L42 39 L28 35 Z" fill="#6f9a56"/>
<path d="M8 55 L42 49 L42 53 L16 60 Z" fill="#cfd3d6"/>
<path d="M16 60 L42 53 L42 56 L22 63 Z" fill="#b9b7a6"/>
<path d="M22 64 L42 56 L46 64 Z" fill="#5c564e"/>
<rect x="48" y="6" width="4" height="22" fill="#c9d6e2"/>
<!-- bear -->
<path d="M0 30 C6 27 16 29 22 33 L27 38 L24 46 L18 47 L18 54 L8 55 L0 48 Z" fill="#a6733a"/>
<path d="M4 30 C10 28 18 30 22 34 L16 38 L6 36 Z" fill="#8a5a2c"/>
<path d="M4 40 L14 42 L14 52 L6 52 Z" fill="#b8854a"/>
<path d="M20 37 C24 34 30 37 32 40 L32 42 C30 45 24 44 20 43 Z" fill="#3b3834"/>
<ellipse cx="23" cy="34" rx="2" ry="1.600" fill="#4a3a2c"/>
<!-- person -->
<path d="M48 15 C50 10 58 11 59.500 16 L59 22 L55 19 L50 21 Z" fill="#1d1c20"/>
<path d="M50 20 L55 19 L58.500 22 L58 27 L52 28 Z" fill="#c79a82"/>
<path d="M44 38 C45 30 48 26 52 26 L58 27 C62 28 64 30 64 34 L64 50 L56 56 L52 60 L42 61 L44 46 Z" fill="#dcdbee"/>
<path d="M50 28 L53 27 L54 36 L51 36 Z" fill="#4a72a6"/>
<path d="M42 40 L46 36 L48 44 L56 46 L60 44 L60 48 L50 50 L44 47 Z" fill="#cfa088"/>
<path d="M46 42 C50 40 54 42 54 46 L48 50 Z" fill="#e9e8f4"/>
<path d="M54 36 L57 48 L55 50 L52 38 Z" fill="#7a7f96"/>
<path d="M39.500 48 L43 47 L42.500 62 L38.500 61 Z" fill="#2f3440"/>
</g>
</svg></div><div class="mic" style="right:12.500px;top:12.9px"><svg viewBox="0 0 24 24"><path fill="#fff" d="M19 11h-1.7c0 .74-.16 1.43-.43 2.05l1.23 1.23c.56-.98.9-2.090.9-3.280zm-4.020.170c0-.060.020-.110.020-.170V5c0-1.660-1.340-3-3-3S9 3.340 9 5v.180l5.980 5.990zM4.270 3L3 4.270l6.010 6.010V11c0 1.660 1.330 3 2.990 3 .220 0 .440-.030.650-.080l1.660 1.660c-.710.330-1.500.520-2.310.520-2.760 0-5.300-2.100-5.300-5.100H5c0 3.410 2.720 6.230 6 6.720V21h2v-3.280c.910-.130 1.770-.450 2.540-.9L19.730 21 21 19.730 4.270 3z"/></svg></div><div class="name" id="n_r3c3" style="top:147.67px;letter-spacing:0.813px;">Денис Краковецький</div></div>
<div class="tile " style="left:802px;top:474.34px;width:212px"><div class="ph"><svg viewBox="0 0 64 64" width="64" height="64">
<circle cx="32" cy="32" r="32" fill="#5d6063"/>
<circle cx="32" cy="32" r="31.6" fill="none" stroke="#777a7d" stroke-width="0.9"/>
<path d="M25 0.6 H39 M25 63.4 H39 M0.600 25 V39 M63.400 25 V39" stroke="#dfe0e1" stroke-width="1.100" fill="none" stroke-linecap="round"/>
<circle cx="32" cy="32" r="28.5" fill="none" stroke="#85888b" stroke-width="0.9"/>
<g transform="translate(4.300,4.600) scale(.94)">
<path d="M0 0 H10 L14 4 V14 H0 Z" fill="#e4e8f6"/>
<path d="M10 0 L14 4 H10 Z" fill="#fff"/>
<path d="M0 14 V9.500 C2 6.500 5 6.500 7.500 9 L10.500 14 Z" fill="#57b033"/>
<path d="M8.200 14 L11.300 8.500 L14 13 V14 Z" fill="#c9cfc9"/>
<path d="M7.600 9.200 L10.800 5.800 L11.400 6.400 L8.500 10 Z" fill="#5b5a8a"/>
</g></svg></div><div class="mic" style="right:12.500px;top:12.9px"><svg viewBox="0 0 24 24"><path fill="#fff" d="M19 11h-1.7c0 .74-.16 1.43-.43 2.05l1.23 1.23c.56-.98.9-2.090.9-3.280zm-4.020.170c0-.060.020-.110.020-.170V5c0-1.660-1.340-3-3-3S9 3.340 9 5v.180l5.980 5.990zM4.270 3L3 4.270l6.010 6.010V11c0 1.660 1.330 3 2.990 3 .220 0 .440-.030.650-.080l1.660 1.660c-.710.330-1.500.520-2.310.520-2.760 0-5.300-2.100-5.300-5.100H5c0 3.410 2.720 6.230 6 6.720V21h2v-3.280c.910-.130 1.770-.450 2.540-.9L19.730 21 21 19.730 4.270 3z"/></svg></div><div class="name" id="n_r3c4" style="top:147.67px;letter-spacing:0.649px;">Ігор Салій</div></div>
<div class="tile " style="left:1026px;top:474.34px;width:212px"><svg class="abs" style="left:0;top:0" width="212.330" height="176.670" viewBox="0 0 212.330 176.670">
<defs>
<filter id="bl5" x="-10%" y="-10%" width="120%" height="120%"><feGaussianBlur stdDeviation=".45"/></filter>
<filter id="bl5b" x="-10%" y="-10%" width="120%" height="120%"><feGaussianBlur stdDeviation="1.100"/></filter>
<clipPath id="cpt"><rect x="0" y="27.700" width="212.330" height="119.900"/></clipPath>
</defs>
<g clip-path="url(#cpt)">
<rect x="0" y="27.700" width="212.330" height="120" fill="#8f8e8a"/>
<g filter="url(#bl5)">
<rect x="0" y="27.700" width="36.700" height="120" fill="#d4d4d3"/>
<rect x="0" y="27.700" width="28" height="16" fill="#dededd"/>
<rect x="28" y="27.700" width="3" height="120" fill="#f1f1f0"/>
<rect x="31" y="27.700" width="5.700" height="120" fill="#a9a8a5"/>
<rect x="-2" y="44" width="16.700" height="50" fill="#f3f3f1" stroke="#1f1f1f" stroke-width="1.300"/>
<path d="M1 52 C8 56 10 66 6 76 C4 82 2 86 0 88" stroke="#222" stroke-width="1.300" fill="none"/>
<path d="M0 60 C5 64 5 72 1 80" stroke="#333" stroke-width="1" fill="none"/>
<!-- bookshelf -->
<rect x="36.700" y="27.700" width="136" height="90" fill="#7b7a77"/>
<rect x="38.3" y="29.7" width="2.2" height="8.3" fill="#62605c"/><rect x="40.5" y="28.5" width="2.2" height="9.5" fill="#62605c"/><rect x="42.7" y="28.1" width="2.2" height="9.9" fill="#85827c"/><rect x="44.9" y="28.6" width="1.5" height="9.4" fill="#928d80"/><rect x="46.4" y="29.3" width="1.8" height="8.7" fill="#928d80"/><rect x="48.2" y="28.7" width="1.5" height="9.3" fill="#77746e"/><rect x="49.7" y="30.8" width="1.8" height="7.2" fill="#a09c94"/><rect x="51.5" y="28.1" width="1.8" height="9.9" fill="#c4beb0"/><rect x="53.3" y="29.4" width="2.2" height="8.6" fill="#dedcd6"/><rect x="57.3" y="28.5" width="2.2" height="9.5" fill="#77746e"/><rect x="61.6" y="28.4" width="1.5" height="9.6" fill="#cbc8c0"/><rect x="65.8" y="29.9" width="2.2" height="8.1" fill="#85827c"/><rect x="68.0" y="28.1" width="1.2" height="9.9" fill="#a09c94"/><rect x="69.2" y="28.6" width="2.2" height="9.4" fill="#4a4846"/><rect x="71.4" y="30.4" width="1.8" height="7.6" fill="#cbc8c0"/><rect x="75.9" y="31.1" width="1.2" height="6.9" fill="#a09c94"/><rect x="77.1" y="28.7" width="1.5" height="9.3" fill="#c4beb0"/><rect x="78.6" y="28.0" width="1.5" height="10.0" fill="#c4beb0"/><rect x="80.1" y="28.9" width="1.5" height="9.1" fill="#4a4846"/><rect x="81.6" y="29.7" width="1.8" height="8.3" fill="#c4beb0"/><rect x="83.4" y="27.8" width="1.2" height="10.2" fill="#62605c"/><rect x="84.6" y="28.1" width="1.2" height="9.9" fill="#c4beb0"/><rect x="85.8" y="28.1" width="2.2" height="9.9" fill="#85827c"/><rect x="88.0" y="27.9" width="1.8" height="10.1" fill="#4a4846"/><rect x="94.0" y="28.7" width="1.8" height="9.3" fill="#77746e"/><rect x="95.8" y="30.4" width="1.8" height="7.6" fill="#dedcd6"/><rect x="97.6" y="29.0" width="1.5" height="9.0" fill="#c4beb0"/><rect x="99.1" y="29.6" width="1.8" height="8.4" fill="#62605c"/><rect x="100.9" y="29.9" width="1.2" height="8.1" fill="#e8e6e0"/><rect x="102.1" y="28.2" width="2.2" height="9.8" fill="#b3b0a8"/><rect x="104.3" y="31.0" width="1.5" height="7.0" fill="#e8e6e0"/><rect x="105.8" y="29.4" width="1.5" height="8.6" fill="#c4beb0"/><rect x="107.3" y="29.6" width="1.5" height="8.4" fill="#a09c94"/><rect x="108.8" y="29.9" width="1.8" height="8.1" fill="#4a4846"/><rect x="110.6" y="29.8" width="1.5" height="8.2" fill="#4a4846"/><rect x="112.1" y="28.0" width="1.5" height="10.0" fill="#c4beb0"/><rect x="113.6" y="29.6" width="1.8" height="8.4" fill="#4a4846"/><rect x="115.4" y="28.1" width="1.8" height="9.9" fill="#4a4846"/><rect x="117.2" y="28.0" width="2.2" height="10.0" fill="#b3b0a8"/><rect x="119.4" y="29.5" width="1.2" height="8.5" fill="#62605c"/><rect x="122.6" y="30.7" width="1.5" height="7.3" fill="#928d80"/><rect x="124.1" y="30.9" width="2.2" height="7.1" fill="#dedcd6"/><rect x="126.3" y="30.3" width="2.2" height="7.7" fill="#4a4846"/><rect x="128.5" y="28.3" width="2.2" height="9.7" fill="#85827c"/><rect x="130.7" y="29.4" width="1.5" height="8.6" fill="#dedcd6"/><rect x="132.2" y="27.9" width="1.2" height="10.1" fill="#dedcd6"/><rect x="133.4" y="28.4" width="1.8" height="9.6" fill="#62605c"/><rect x="135.2" y="28.1" width="2.2" height="9.9" fill="#a09c94"/><rect x="137.4" y="28.5" width="2.2" height="9.5" fill="#4a4846"/><rect x="139.6" y="30.8" width="0.8" height="7.2" fill="#b3b0a8"/><rect x="142.4" y="28.7" width="1.5" height="9.3" fill="#4a4846"/><rect x="146.2" y="28.1" width="1.2" height="9.9" fill="#dedcd6"/><rect x="147.3" y="29.9" width="1.5" height="8.1" fill="#b3b0a8"/><rect x="148.8" y="28.0" width="1.2" height="10.0" fill="#dedcd6"/><rect x="150.0" y="30.5" width="1.8" height="7.5" fill="#62605c"/><rect x="151.8" y="28.7" width="1.8" height="9.3" fill="#e8e6e0"/><rect x="153.7" y="30.0" width="1.2" height="8.0" fill="#a09c94"/><rect x="154.8" y="29.5" width="1.5" height="8.5" fill="#cbc8c0"/><rect x="161.6" y="28.5" width="1.8" height="9.5" fill="#77746e"/><rect x="163.4" y="28.5" width="1.2" height="9.5" fill="#85827c"/><rect x="164.6" y="30.7" width="1.2" height="7.3" fill="#4a4846"/><rect x="165.8" y="30.8" width="1.5" height="7.2" fill="#85827c"/><rect x="167.3" y="29.8" width="1.2" height="8.2" fill="#b3b0a8"/><rect x="168.5" y="28.5" width="2.2" height="9.5" fill="#b3b0a8"/><rect x="170.7" y="31.1" width="1.5" height="6.9" fill="#dedcd6"/><rect x="38.3" y="41.9" width="1.2" height="8.8" fill="#85827c"/><rect x="39.5" y="41.1" width="2.2" height="9.6" fill="#77746e"/><rect x="44.0" y="43.0" width="2.2" height="7.7" fill="#e8e6e0"/><rect x="46.2" y="43.4" width="1.2" height="7.3" fill="#e8e6e0"/><rect x="47.4" y="41.1" width="2.2" height="9.6" fill="#62605c"/><rect x="49.6" y="42.8" width="2.2" height="7.9" fill="#e8e6e0"/><rect x="51.8" y="41.0" width="1.5" height="9.7" fill="#85827c"/><rect x="53.3" y="43.7" width="2.2" height="7.0" fill="#dedcd6"/><rect x="55.5" y="40.7" width="1.5" height="10.0" fill="#62605c"/><rect x="57.0" y="43.0" width="1.8" height="7.7" fill="#77746e"/><rect x="58.8" y="43.6" width="0.8" height="7.1" fill="#928d80"/><rect x="61.6" y="41.0" width="2.2" height="9.7" fill="#4a4846"/><rect x="63.8" y="41.9" width="2.2" height="8.8" fill="#b3b0a8"/><rect x="66.0" y="41.2" width="2.2" height="9.5" fill="#cbc8c0"/><rect x="68.2" y="43.5" width="2.2" height="7.2" fill="#77746e"/><rect x="70.4" y="42.5" width="1.2" height="8.2" fill="#4a4846"/><rect x="71.6" y="41.0" width="1.5" height="9.7" fill="#cbc8c0"/><rect x="74.9" y="41.2" width="1.5" height="9.5" fill="#e8e6e0"/><rect x="76.4" y="43.2" width="2.2" height="7.5" fill="#85827c"/><rect x="78.6" y="41.6" width="1.8" height="9.1" fill="#4a4846"/><rect x="80.4" y="42.0" width="1.8" height="8.7" fill="#cbc8c0"/><rect x="82.2" y="43.1" width="1.8" height="7.6" fill="#62605c"/><rect x="85.8" y="41.0" width="1.2" height="9.7" fill="#a09c94"/><rect x="87.0" y="41.0" width="1.2" height="9.7" fill="#dedcd6"/><rect x="88.2" y="40.8" width="1.5" height="9.9" fill="#4a4846"/><rect x="92.2" y="42.1" width="2.2" height="8.6" fill="#e8e6e0"/><rect x="94.4" y="40.5" width="1.5" height="10.2" fill="#4a4846"/><rect x="95.9" y="42.3" width="1.8" height="8.4" fill="#928d80"/><rect x="97.7" y="41.6" width="1.5" height="9.1" fill="#b3b0a8"/><rect x="99.2" y="42.7" width="2.2" height="8.0" fill="#85827c"/><rect x="101.4" y="43.2" width="1.2" height="7.5" fill="#c4beb0"/><rect x="102.6" y="41.2" width="1.8" height="9.5" fill="#cbc8c0"/><rect x="104.4" y="41.1" width="1.2" height="9.6" fill="#77746e"/><rect x="107.8" y="43.4" width="2.2" height="7.3" fill="#a09c94"/><rect x="110.0" y="40.9" width="1.5" height="9.8" fill="#c4beb0"/><rect x="111.5" y="40.9" width="1.5" height="9.8" fill="#c4beb0"/><rect x="113.0" y="43.5" width="1.5" height="7.2" fill="#928d80"/><rect x="114.5" y="42.3" width="2.2" height="8.4" fill="#928d80"/><rect x="116.8" y="41.7" width="2.2" height="9.0" fill="#cbc8c0"/><rect x="119.0" y="41.6" width="1.5" height="9.1" fill="#e8e6e0"/><rect x="122.6" y="40.8" width="1.8" height="9.9" fill="#b3b0a8"/><rect x="124.4" y="40.9" width="1.5" height="9.8" fill="#77746e"/><rect x="125.9" y="42.0" width="1.5" height="8.7" fill="#85827c"/><rect x="130.1" y="41.8" width="1.5" height="8.9" fill="#dedcd6"/><rect x="131.6" y="43.5" width="1.8" height="7.2" fill="#62605c"/><rect x="133.4" y="40.7" width="2.2" height="10.0" fill="#62605c"/><rect x="135.6" y="42.2" width="1.8" height="8.5" fill="#c4beb0"/><rect x="137.4" y="40.9" width="2.2" height="9.8" fill="#77746e"/><rect x="142.4" y="41.3" width="1.2" height="9.4" fill="#c4beb0"/><rect x="143.6" y="43.0" width="1.5" height="7.7" fill="#cbc8c0"/><rect x="145.1" y="41.5" width="2.2" height="9.2" fill="#a09c94"/><rect x="147.3" y="43.4" width="2.2" height="7.3" fill="#85827c"/><rect x="149.5" y="43.0" width="1.8" height="7.7" fill="#77746e"/><rect x="151.3" y="41.6" width="1.5" height="9.1" fill="#62605c"/><rect x="155.0" y="42.7" width="1.2" height="8.0" fill="#cbc8c0"/><rect x="156.2" y="40.6" width="1.8" height="10.1" fill="#a09c94"/><rect x="158.0" y="43.5" width="1.6" height="7.2" fill="#77746e"/><rect x="163.8" y="40.5" width="1.2" height="10.2" fill="#dedcd6"/><rect x="165.0" y="41.5" width="1.2" height="9.2" fill="#e8e6e0"/><rect x="168.5" y="42.9" width="2.2" height="7.8" fill="#62605c"/><rect x="170.7" y="41.0" width="1.5" height="9.7" fill="#e8e6e0"/><rect x="38.3" y="54.4" width="1.5" height="9.0" fill="#cbc8c0"/><rect x="39.8" y="56.0" width="1.8" height="7.4" fill="#a09c94"/><rect x="41.6" y="56.2" width="2.2" height="7.2" fill="#e8e6e0"/><rect x="43.8" y="55.0" width="2.2" height="8.4" fill="#85827c"/><rect x="46.0" y="53.5" width="1.5" height="9.9" fill="#e8e6e0"/><rect x="47.5" y="54.4" width="1.8" height="9.0" fill="#4a4846"/><rect x="56.6" y="55.6" width="1.8" height="7.8" fill="#62605c"/><rect x="58.4" y="53.5" width="1.2" height="9.9" fill="#62605c"/><rect x="61.6" y="55.1" width="1.5" height="8.3" fill="#62605c"/><rect x="63.1" y="53.2" width="2.2" height="10.2" fill="#4a4846"/><rect x="65.3" y="55.7" width="1.5" height="7.7" fill="#dedcd6"/><rect x="66.8" y="54.6" width="1.2" height="8.8" fill="#cbc8c0"/><rect x="68.0" y="55.7" width="1.5" height="7.7" fill="#85827c"/><rect x="69.5" y="53.2" width="1.2" height="10.2" fill="#a09c94"/><rect x="74.0" y="54.2" width="1.8" height="9.2" fill="#77746e"/><rect x="78.5" y="53.4" width="1.2" height="10.0" fill="#4a4846"/><rect x="79.7" y="55.4" width="1.5" height="8.0" fill="#4a4846"/><rect x="81.2" y="56.4" width="1.5" height="7.0" fill="#85827c"/><rect x="82.7" y="55.8" width="1.2" height="7.6" fill="#77746e"/><rect x="83.9" y="54.9" width="1.2" height="8.5" fill="#a09c94"/><rect x="85.1" y="56.0" width="1.5" height="7.4" fill="#c4beb0"/><rect x="86.6" y="53.3" width="2.2" height="10.1" fill="#c4beb0"/><rect x="88.8" y="54.9" width="1.4" height="8.5" fill="#62605c"/><rect x="92.2" y="54.5" width="1.5" height="8.9" fill="#4a4846"/><rect x="93.7" y="54.1" width="1.5" height="9.3" fill="#e8e6e0"/><rect x="95.2" y="53.3" width="1.2" height="10.1" fill="#e8e6e0"/><rect x="96.4" y="54.2" width="1.5" height="9.2" fill="#a09c94"/><rect x="97.9" y="56.4" width="1.2" height="7.0" fill="#62605c"/><rect x="99.1" y="55.9" width="1.8" height="7.5" fill="#cbc8c0"/><rect x="100.9" y="54.5" width="1.2" height="8.9" fill="#62605c"/><rect x="102.1" y="55.5" width="1.5" height="7.9" fill="#77746e"/><rect x="103.6" y="55.6" width="1.5" height="7.8" fill="#b3b0a8"/><rect x="108.4" y="55.7" width="1.2" height="7.7" fill="#62605c"/><rect x="109.6" y="53.4" width="2.2" height="10.0" fill="#b3b0a8"/><rect x="111.8" y="55.2" width="1.8" height="8.2" fill="#dedcd6"/><rect x="113.6" y="54.6" width="1.8" height="8.8" fill="#c4beb0"/><rect x="115.4" y="53.5" width="2.2" height="9.9" fill="#a09c94"/><rect x="119.4" y="55.1" width="1.2" height="8.3" fill="#a09c94"/><rect x="122.6" y="56.2" width="1.8" height="7.2" fill="#928d80"/><rect x="124.4" y="54.8" width="1.8" height="8.6" fill="#b3b0a8"/><rect x="126.2" y="56.5" width="1.5" height="6.9" fill="#928d80"/><rect x="127.7" y="56.2" width="2.2" height="7.2" fill="#4a4846"/><rect x="133.2" y="56.3" width="2.2" height="7.1" fill="#dedcd6"/><rect x="135.4" y="54.5" width="1.8" height="8.9" fill="#e8e6e0"/><rect x="137.2" y="55.6" width="1.8" height="7.8" fill="#e8e6e0"/><rect x="139.0" y="55.9" width="1.2" height="7.5" fill="#4a4846"/><rect x="142.4" y="55.9" width="2.2" height="7.5" fill="#b3b0a8"/><rect x="144.6" y="54.2" width="1.5" height="9.2" fill="#b3b0a8"/><rect x="146.1" y="54.0" width="1.8" height="9.4" fill="#4a4846"/><rect x="147.9" y="53.2" width="2.2" height="10.2" fill="#cbc8c0"/><rect x="150.1" y="53.3" width="1.2" height="10.1" fill="#4a4846"/><rect x="151.3" y="53.2" width="1.8" height="10.2" fill="#77746e"/><rect x="153.1" y="56.0" width="1.8" height="7.4" fill="#e8e6e0"/><rect x="157.6" y="56.4" width="1.8" height="7.0" fill="#85827c"/><rect x="161.6" y="53.7" width="2.2" height="9.7" fill="#dedcd6"/><rect x="163.8" y="55.5" width="1.5" height="7.9" fill="#4a4846"/><rect x="165.3" y="54.0" width="1.2" height="9.4" fill="#dedcd6"/><rect x="166.5" y="56.2" width="1.8" height="7.2" fill="#cbc8c0"/><rect x="168.3" y="53.9" width="1.5" height="9.5" fill="#928d80"/><rect x="169.8" y="55.9" width="1.8" height="7.5" fill="#e8e6e0"/><rect x="38.3" y="67.1" width="1.8" height="9.0" fill="#85827c"/><rect x="42.8" y="65.9" width="2.2" height="10.2" fill="#4a4846"/><rect x="45.0" y="65.9" width="1.2" height="10.2" fill="#85827c"/><rect x="48.0" y="66.5" width="1.5" height="9.6" fill="#c4beb0"/><rect x="49.5" y="67.0" width="2.2" height="9.1" fill="#c4beb0"/><rect x="51.7" y="68.4" width="1.2" height="7.7" fill="#928d80"/><rect x="52.9" y="67.3" width="1.8" height="8.8" fill="#77746e"/><rect x="54.7" y="66.2" width="1.8" height="9.9" fill="#cbc8c0"/><rect x="56.5" y="68.8" width="2.2" height="7.3" fill="#62605c"/><rect x="58.7" y="69.0" width="0.9" height="7.1" fill="#85827c"/><rect x="61.6" y="66.7" width="1.2" height="9.4" fill="#b3b0a8"/><rect x="62.8" y="68.8" width="1.2" height="7.3" fill="#85827c"/><rect x="64.0" y="66.8" width="1.5" height="9.3" fill="#77746e"/><rect x="65.5" y="67.4" width="1.2" height="8.7" fill="#4a4846"/><rect x="66.7" y="67.2" width="2.2" height="8.9" fill="#cbc8c0"/><rect x="68.9" y="66.3" width="1.2" height="9.8" fill="#e8e6e0"/><rect x="70.1" y="67.9" width="1.5" height="8.2" fill="#928d80"/><rect x="71.6" y="68.5" width="1.5" height="7.6" fill="#928d80"/><rect x="73.1" y="66.4" width="1.2" height="9.7" fill="#e8e6e0"/><rect x="74.3" y="66.4" width="1.5" height="9.7" fill="#a09c94"/><rect x="77.6" y="68.5" width="2.2" height="7.6" fill="#a09c94"/><rect x="79.8" y="67.1" width="1.8" height="9.0" fill="#85827c"/><rect x="84.9" y="67.3" width="1.8" height="8.8" fill="#4a4846"/><rect x="86.7" y="66.0" width="1.8" height="10.1" fill="#cbc8c0"/><rect x="88.5" y="67.4" width="1.7" height="8.7" fill="#c4beb0"/><rect x="92.2" y="68.7" width="1.2" height="7.4" fill="#85827c"/><rect x="98.5" y="67.5" width="1.8" height="8.6" fill="#4a4846"/><rect x="100.3" y="67.4" width="1.8" height="8.7" fill="#b3b0a8"/><rect x="102.1" y="66.6" width="1.2" height="9.5" fill="#85827c"/><rect x="103.3" y="68.5" width="1.8" height="7.6" fill="#cbc8c0"/><rect x="105.1" y="66.0" width="1.8" height="10.1" fill="#cbc8c0"/><rect x="106.9" y="67.8" width="1.5" height="8.3" fill="#dedcd6"/><rect x="108.4" y="67.7" width="1.8" height="8.4" fill="#4a4846"/><rect x="110.2" y="66.5" width="1.5" height="9.6" fill="#62605c"/><rect x="111.7" y="67.3" width="1.2" height="8.8" fill="#85827c"/><rect x="112.9" y="68.4" width="1.8" height="7.7" fill="#a09c94"/><rect x="114.7" y="69.0" width="1.8" height="7.1" fill="#4a4846"/><rect x="116.5" y="67.7" width="1.2" height="8.4" fill="#cbc8c0"/><rect x="117.7" y="68.4" width="1.2" height="7.7" fill="#c4beb0"/><rect x="118.9" y="69.0" width="1.7" height="7.1" fill="#928d80"/><rect x="122.6" y="66.5" width="1.5" height="9.6" fill="#62605c"/><rect x="124.1" y="66.3" width="2.2" height="9.8" fill="#c4beb0"/><rect x="126.3" y="66.2" width="1.5" height="9.9" fill="#c4beb0"/><rect x="127.8" y="67.5" width="1.8" height="8.6" fill="#4a4846"/><rect x="129.6" y="67.1" width="1.8" height="9.0" fill="#62605c"/><rect x="131.4" y="67.6" width="2.2" height="8.5" fill="#dedcd6"/><rect x="133.6" y="68.3" width="2.2" height="7.8" fill="#e8e6e0"/><rect x="138.0" y="66.3" width="1.2" height="9.8" fill="#85827c"/><rect x="139.2" y="68.8" width="1.2" height="7.3" fill="#e8e6e0"/><rect x="142.4" y="66.4" width="1.8" height="9.7" fill="#dedcd6"/><rect x="144.2" y="66.1" width="2.2" height="10.0" fill="#a09c94"/><rect x="146.4" y="67.3" width="1.8" height="8.8" fill="#b3b0a8"/><rect x="148.2" y="67.2" width="1.2" height="8.9" fill="#b3b0a8"/><rect x="149.4" y="68.0" width="1.2" height="8.1" fill="#c4beb0"/><rect x="150.6" y="66.1" width="1.2" height="10.0" fill="#928d80"/><rect x="151.8" y="68.2" width="1.8" height="7.9" fill="#85827c"/><rect x="153.6" y="67.2" width="2.2" height="8.9" fill="#928d80"/><rect x="155.8" y="68.4" width="2.2" height="7.7" fill="#77746e"/><rect x="158.0" y="66.7" width="1.2" height="9.4" fill="#4a4846"/><rect x="161.6" y="66.7" width="1.8" height="9.4" fill="#b3b0a8"/><rect x="163.4" y="68.4" width="1.8" height="7.7" fill="#dedcd6"/><rect x="165.2" y="66.5" width="1.8" height="9.6" fill="#928d80"/><rect x="167.0" y="66.0" width="1.2" height="10.1" fill="#dedcd6"/><rect x="168.2" y="68.0" width="1.2" height="8.1" fill="#dedcd6"/><rect x="169.4" y="69.0" width="1.8" height="7.1" fill="#85827c"/><rect x="38.3" y="80.2" width="2.2" height="8.6" fill="#85827c"/><rect x="40.5" y="79.8" width="1.8" height="9.0" fill="#85827c"/><rect x="42.3" y="81.0" width="1.5" height="7.8" fill="#4a4846"/><rect x="43.8" y="79.5" width="1.2" height="9.3" fill="#dedcd6"/><rect x="45.0" y="80.4" width="1.5" height="8.4" fill="#dedcd6"/><rect x="46.5" y="80.9" width="1.5" height="7.9" fill="#62605c"/><rect x="48.0" y="80.2" width="1.8" height="8.6" fill="#c4beb0"/><rect x="49.8" y="81.8" width="1.2" height="7.0" fill="#e8e6e0"/><rect x="51.0" y="81.4" width="1.8" height="7.4" fill="#b3b0a8"/><rect x="52.8" y="80.9" width="1.8" height="7.9" fill="#b3b0a8"/><rect x="54.6" y="80.2" width="1.5" height="8.6" fill="#b3b0a8"/><rect x="56.1" y="80.0" width="1.5" height="8.8" fill="#cbc8c0"/><rect x="57.6" y="81.5" width="2.0" height="7.3" fill="#85827c"/><rect x="61.6" y="78.6" width="2.2" height="10.2" fill="#a09c94"/><rect x="63.8" y="80.6" width="1.8" height="8.2" fill="#928d80"/><rect x="65.6" y="79.7" width="1.2" height="9.1" fill="#dedcd6"/><rect x="66.8" y="78.6" width="2.2" height="10.2" fill="#e8e6e0"/><rect x="69.0" y="79.6" width="1.5" height="9.2" fill="#928d80"/><rect x="72.3" y="81.0" width="1.2" height="7.8" fill="#85827c"/><rect x="73.5" y="79.5" width="1.2" height="9.3" fill="#b3b0a8"/><rect x="74.7" y="78.9" width="1.2" height="9.9" fill="#b3b0a8"/><rect x="75.9" y="81.2" width="1.2" height="7.6" fill="#dedcd6"/><rect x="77.1" y="79.3" width="1.5" height="9.5" fill="#dedcd6"/><rect x="78.6" y="81.6" width="1.8" height="7.2" fill="#cbc8c0"/><rect x="83.7" y="81.2" width="2.2" height="7.6" fill="#cbc8c0"/><rect x="88.2" y="79.4" width="2.0" height="9.4" fill="#c4beb0"/><rect x="94.0" y="81.5" width="1.8" height="7.3" fill="#cbc8c0"/><rect x="95.8" y="81.8" width="1.2" height="7.0" fill="#cbc8c0"/><rect x="97.0" y="79.9" width="1.5" height="8.9" fill="#c4beb0"/><rect x="98.5" y="79.6" width="1.5" height="9.2" fill="#a09c94"/><rect x="100.0" y="81.0" width="1.5" height="7.8" fill="#dedcd6"/><rect x="101.5" y="80.8" width="1.5" height="8.0" fill="#b3b0a8"/><rect x="103.0" y="80.8" width="1.5" height="8.0" fill="#cbc8c0"/><rect x="107.8" y="79.2" width="1.8" height="9.6" fill="#4a4846"/><rect x="109.6" y="80.7" width="1.2" height="8.1" fill="#c4beb0"/><rect x="110.8" y="79.9" width="1.8" height="8.9" fill="#e8e6e0"/><rect x="112.6" y="81.8" width="1.5" height="7.0" fill="#85827c"/><rect x="114.1" y="79.1" width="1.8" height="9.7" fill="#cbc8c0"/><rect x="115.9" y="79.8" width="2.2" height="9.0" fill="#e8e6e0"/><rect x="118.1" y="81.2" width="1.5" height="7.6" fill="#62605c"/><rect x="119.6" y="81.3" width="1.0" height="7.5" fill="#85827c"/><rect x="122.6" y="79.4" width="1.2" height="9.4" fill="#4a4846"/><rect x="123.8" y="79.3" width="1.8" height="9.5" fill="#4a4846"/><rect x="125.6" y="80.2" width="2.2" height="8.6" fill="#928d80"/><rect x="127.8" y="78.8" width="1.8" height="10.0" fill="#a09c94"/><rect x="129.6" y="79.1" width="2.2" height="9.7" fill="#cbc8c0"/><rect x="131.8" y="81.4" width="2.2" height="7.4" fill="#4a4846"/><rect x="134.0" y="79.9" width="1.5" height="8.9" fill="#c4beb0"/><rect x="135.5" y="80.7" width="1.8" height="8.1" fill="#dedcd6"/><rect x="137.3" y="81.7" width="1.2" height="7.1" fill="#b3b0a8"/><rect x="138.5" y="81.7" width="1.8" height="7.1" fill="#928d80"/><rect x="142.4" y="79.6" width="2.2" height="9.2" fill="#cbc8c0"/><rect x="144.6" y="81.0" width="1.5" height="7.8" fill="#85827c"/><rect x="146.1" y="81.6" width="1.2" height="7.2" fill="#c4beb0"/><rect x="147.3" y="80.7" width="1.8" height="8.1" fill="#a09c94"/><rect x="149.1" y="80.8" width="1.8" height="8.0" fill="#62605c"/><rect x="153.2" y="81.0" width="1.2" height="7.8" fill="#e8e6e0"/><rect x="154.3" y="79.2" width="1.2" height="9.6" fill="#62605c"/><rect x="155.5" y="81.6" width="1.2" height="7.2" fill="#4a4846"/><rect x="156.7" y="81.1" width="1.5" height="7.7" fill="#85827c"/><rect x="161.6" y="81.1" width="1.8" height="7.7" fill="#62605c"/><rect x="169.4" y="78.7" width="1.8" height="10.1" fill="#77746e"/><rect x="171.2" y="81.7" width="1.0" height="7.1" fill="#62605c"/><rect x="38.3" y="93.4" width="2.2" height="8.1" fill="#85827c"/><rect x="40.5" y="93.5" width="2.2" height="8.0" fill="#c4beb0"/><rect x="42.7" y="92.8" width="1.8" height="8.7" fill="#b3b0a8"/><rect x="44.5" y="91.4" width="1.8" height="10.1" fill="#e8e6e0"/><rect x="46.3" y="91.4" width="1.5" height="10.1" fill="#e8e6e0"/><rect x="47.8" y="91.6" width="2.2" height="9.9" fill="#cbc8c0"/><rect x="50.0" y="92.5" width="1.8" height="9.0" fill="#a09c94"/><rect x="51.8" y="93.7" width="1.2" height="7.8" fill="#a09c94"/><rect x="53.0" y="93.1" width="1.2" height="8.4" fill="#928d80"/><rect x="54.2" y="92.5" width="2.2" height="9.0" fill="#c4beb0"/><rect x="56.4" y="92.5" width="1.2" height="9.0" fill="#cbc8c0"/><rect x="57.6" y="92.9" width="2.0" height="8.6" fill="#c4beb0"/><rect x="61.6" y="92.8" width="1.5" height="8.7" fill="#85827c"/><rect x="63.1" y="93.8" width="1.5" height="7.7" fill="#a09c94"/><rect x="64.6" y="92.8" width="2.2" height="8.7" fill="#77746e"/><rect x="66.8" y="93.4" width="1.8" height="8.1" fill="#62605c"/><rect x="68.6" y="94.6" width="2.2" height="6.9" fill="#cbc8c0"/><rect x="70.8" y="94.5" width="1.2" height="7.0" fill="#77746e"/><rect x="72.0" y="93.6" width="1.5" height="7.9" fill="#4a4846"/><rect x="73.5" y="94.5" width="1.5" height="7.0" fill="#b3b0a8"/><rect x="78.3" y="91.9" width="1.2" height="9.6" fill="#928d80"/><rect x="79.5" y="91.3" width="1.2" height="10.2" fill="#4a4846"/><rect x="80.7" y="91.5" width="1.2" height="10.0" fill="#85827c"/><rect x="84.6" y="91.3" width="1.5" height="10.2" fill="#4a4846"/><rect x="86.1" y="93.2" width="1.2" height="8.3" fill="#dedcd6"/><rect x="87.3" y="92.0" width="2.2" height="9.5" fill="#4a4846"/><rect x="94.9" y="93.4" width="2.2" height="8.1" fill="#dedcd6"/><rect x="97.1" y="91.3" width="1.5" height="10.2" fill="#a09c94"/><rect x="98.6" y="93.2" width="1.5" height="8.3" fill="#dedcd6"/><rect x="100.1" y="93.2" width="1.2" height="8.3" fill="#85827c"/><rect x="101.3" y="93.0" width="1.2" height="8.5" fill="#77746e"/><rect x="102.5" y="93.0" width="1.8" height="8.5" fill="#cbc8c0"/><rect x="104.3" y="91.6" width="1.2" height="9.9" fill="#cbc8c0"/><rect x="105.5" y="91.7" width="2.2" height="9.8" fill="#c4beb0"/><rect x="107.7" y="92.9" width="1.5" height="8.6" fill="#c4beb0"/><rect x="109.2" y="93.5" width="1.5" height="8.0" fill="#a09c94"/><rect x="110.7" y="93.9" width="2.2" height="7.6" fill="#85827c"/><rect x="112.9" y="94.0" width="2.2" height="7.5" fill="#cbc8c0"/><rect x="117.4" y="92.8" width="1.5" height="8.7" fill="#a09c94"/><rect x="118.9" y="92.1" width="1.2" height="9.4" fill="#85827c"/><rect x="122.6" y="92.2" width="1.5" height="9.3" fill="#c4beb0"/><rect x="124.1" y="92.2" width="1.8" height="9.3" fill="#dedcd6"/><rect x="125.9" y="93.5" width="1.5" height="8.0" fill="#b3b0a8"/><rect x="127.4" y="94.4" width="1.8" height="7.1" fill="#dedcd6"/><rect x="129.2" y="94.0" width="1.8" height="7.5" fill="#b3b0a8"/><rect x="131.0" y="92.1" width="1.5" height="9.4" fill="#e8e6e0"/><rect x="132.5" y="94.4" width="2.2" height="7.1" fill="#62605c"/><rect x="136.9" y="91.3" width="2.2" height="10.2" fill="#77746e"/><rect x="139.1" y="93.1" width="1.3" height="8.4" fill="#4a4846"/><rect x="142.4" y="93.6" width="1.5" height="7.9" fill="#4a4846"/><rect x="143.9" y="93.5" width="2.2" height="8.0" fill="#a09c94"/><rect x="146.1" y="94.4" width="1.5" height="7.1" fill="#c4beb0"/><rect x="147.6" y="92.8" width="2.2" height="8.7" fill="#c4beb0"/><rect x="149.8" y="93.7" width="1.8" height="7.8" fill="#b3b0a8"/><rect x="151.6" y="93.7" width="1.2" height="7.8" fill="#62605c"/><rect x="152.8" y="94.5" width="2.2" height="7.0" fill="#77746e"/><rect x="155.0" y="94.6" width="1.2" height="6.9" fill="#dedcd6"/><rect x="156.2" y="92.2" width="1.5" height="9.3" fill="#b3b0a8"/><rect x="157.7" y="91.4" width="1.9" height="10.1" fill="#85827c"/><rect x="161.6" y="94.0" width="1.2" height="7.5" fill="#62605c"/><rect x="162.8" y="93.6" width="1.2" height="7.9" fill="#e8e6e0"/><rect x="164.0" y="93.3" width="2.2" height="8.2" fill="#a09c94"/><rect x="166.2" y="93.2" width="1.8" height="8.3" fill="#c4beb0"/><rect x="168.0" y="94.5" width="1.2" height="7.0" fill="#85827c"/><rect x="169.2" y="91.8" width="1.2" height="9.7" fill="#dedcd6"/><rect x="170.4" y="92.9" width="1.8" height="8.6" fill="#a09c94"/><rect x="38.3" y="106.8" width="1.8" height="7.4" fill="#85827c"/><rect x="40.1" y="106.2" width="2.2" height="8.0" fill="#dedcd6"/><rect x="42.3" y="106.7" width="1.2" height="7.5" fill="#a09c94"/><rect x="43.5" y="104.7" width="1.2" height="9.5" fill="#dedcd6"/><rect x="44.7" y="106.8" width="2.2" height="7.4" fill="#62605c"/><rect x="46.9" y="105.5" width="1.5" height="8.7" fill="#928d80"/><rect x="48.4" y="107.0" width="1.2" height="7.2" fill="#62605c"/><rect x="51.9" y="106.5" width="1.5" height="7.7" fill="#62605c"/><rect x="53.4" y="106.9" width="1.2" height="7.3" fill="#62605c"/><rect x="54.6" y="104.4" width="1.5" height="9.8" fill="#928d80"/><rect x="56.1" y="104.6" width="1.2" height="9.6" fill="#e8e6e0"/><rect x="61.6" y="106.6" width="2.2" height="7.6" fill="#e8e6e0"/><rect x="63.8" y="105.0" width="1.8" height="9.2" fill="#4a4846"/><rect x="65.6" y="106.0" width="1.8" height="8.2" fill="#e8e6e0"/><rect x="67.4" y="107.3" width="1.5" height="6.9" fill="#c4beb0"/><rect x="68.9" y="106.2" width="1.2" height="8.0" fill="#a09c94"/><rect x="70.1" y="106.0" width="1.5" height="8.2" fill="#62605c"/><rect x="71.6" y="106.3" width="1.8" height="7.9" fill="#e8e6e0"/><rect x="73.4" y="105.3" width="1.5" height="8.9" fill="#a09c94"/><rect x="74.9" y="106.7" width="2.2" height="7.5" fill="#c4beb0"/><rect x="77.1" y="105.5" width="1.8" height="8.7" fill="#cbc8c0"/><rect x="78.9" y="105.9" width="1.8" height="8.3" fill="#cbc8c0"/><rect x="80.7" y="107.1" width="2.2" height="7.1" fill="#85827c"/><rect x="82.9" y="105.3" width="1.2" height="8.9" fill="#dedcd6"/><rect x="84.1" y="104.3" width="2.2" height="9.9" fill="#85827c"/><rect x="94.4" y="106.3" width="1.5" height="7.9" fill="#77746e"/><rect x="95.9" y="106.7" width="1.8" height="7.5" fill="#dedcd6"/><rect x="97.7" y="106.7" width="1.8" height="7.5" fill="#cbc8c0"/><rect x="99.5" y="105.6" width="1.2" height="8.6" fill="#e8e6e0"/><rect x="100.7" y="104.9" width="1.5" height="9.3" fill="#e8e6e0"/><rect x="102.2" y="105.3" width="2.2" height="8.9" fill="#62605c"/><rect x="104.4" y="104.3" width="1.8" height="9.9" fill="#dedcd6"/><rect x="106.2" y="105.3" width="1.8" height="8.9" fill="#85827c"/><rect x="108.0" y="105.3" width="1.8" height="8.9" fill="#dedcd6"/><rect x="112.1" y="105.2" width="1.5" height="9.0" fill="#4a4846"/><rect x="113.6" y="104.5" width="2.2" height="9.7" fill="#e8e6e0"/><rect x="115.8" y="106.0" width="1.5" height="8.2" fill="#a09c94"/><rect x="117.3" y="107.3" width="1.8" height="6.9" fill="#c4beb0"/><rect x="122.6" y="104.2" width="2.2" height="10.0" fill="#62605c"/><rect x="124.8" y="106.0" width="2.2" height="8.2" fill="#cbc8c0"/><rect x="127.0" y="106.3" width="1.2" height="7.9" fill="#77746e"/><rect x="128.2" y="105.3" width="1.8" height="8.9" fill="#85827c"/><rect x="130.0" y="106.4" width="1.5" height="7.8" fill="#77746e"/><rect x="131.5" y="104.3" width="1.2" height="9.9" fill="#928d80"/><rect x="132.7" y="105.3" width="1.5" height="8.9" fill="#a09c94"/><rect x="134.2" y="105.7" width="2.2" height="8.5" fill="#85827c"/><rect x="136.4" y="107.2" width="1.2" height="7.0" fill="#e8e6e0"/><rect x="137.6" y="104.2" width="1.8" height="10.0" fill="#dedcd6"/><rect x="139.4" y="104.2" width="1.0" height="10.0" fill="#a09c94"/><rect x="142.4" y="105.3" width="2.2" height="8.9" fill="#c4beb0"/><rect x="144.6" y="106.4" width="1.2" height="7.8" fill="#77746e"/><rect x="145.8" y="104.7" width="1.5" height="9.5" fill="#b3b0a8"/><rect x="147.3" y="105.9" width="1.2" height="8.3" fill="#dedcd6"/><rect x="148.5" y="104.3" width="1.2" height="9.9" fill="#cbc8c0"/><rect x="151.9" y="106.4" width="1.2" height="7.8" fill="#c4beb0"/><rect x="155.4" y="106.0" width="1.2" height="8.2" fill="#85827c"/><rect x="156.6" y="105.5" width="1.8" height="8.7" fill="#e8e6e0"/><rect x="158.4" y="105.0" width="1.2" height="9.2" fill="#c4beb0"/><rect x="161.6" y="105.6" width="2.2" height="8.6" fill="#85827c"/><rect x="163.8" y="105.8" width="2.2" height="8.4" fill="#e8e6e0"/><rect x="166.0" y="107.1" width="2.2" height="7.1" fill="#c4beb0"/><rect x="168.2" y="105.1" width="2.2" height="9.1" fill="#928d80"/><rect x="170.4" y="106.8" width="1.2" height="7.4" fill="#b3b0a8"/>
<rect x="36.700" y="38.0" width="136" height="1.700" fill="#dddbd6"/><rect x="36.700" y="50.7" width="136" height="1.700" fill="#dddbd6"/><rect x="36.700" y="63.4" width="136" height="1.700" fill="#dddbd6"/><rect x="36.700" y="76.1" width="136" height="1.700" fill="#dddbd6"/><rect x="36.700" y="88.8" width="136" height="1.700" fill="#dddbd6"/><rect x="36.700" y="101.5" width="136" height="1.700" fill="#dddbd6"/><rect x="36.700" y="114.2" width="136" height="1.700" fill="#dddbd6"/>
<rect x="36.7" y="27.700" width="1.800" height="89" fill="#d9d7d2"/><rect x="60.0" y="27.700" width="1.800" height="89" fill="#d9d7d2"/><rect x="90.6" y="27.700" width="1.800" height="89" fill="#d9d7d2"/><rect x="121.0" y="27.700" width="1.800" height="89" fill="#d9d7d2"/><rect x="140.8" y="27.700" width="1.800" height="89" fill="#d9d7d2"/><rect x="160.0" y="27.700" width="1.800" height="89" fill="#d9d7d2"/><rect x="172.6" y="27.700" width="1.800" height="89" fill="#d9d7d2"/>
<rect x="36.700" y="116" width="136" height="6" fill="#dcdad6"/>
<!-- floor -->
<rect x="120" y="121" width="92" height="27" fill="#3b2a25"/>
<rect x="130" y="121" width="50" height="3" fill="#6a5a52"/>
<rect x="150.500" y="141.700" width="22.100" height="6" fill="#b9b3a6"/>
<!-- ladder -->
<rect x="140.800" y="27.700" width="2" height="98" fill="#f7f7f5"/>
<rect x="160.800" y="27.700" width="2" height="98" fill="#f7f7f5"/>
<rect x="142" y="32.0" width="20" height="1.300" fill="#f5f5f3"/><rect x="142" y="39.2" width="20" height="1.300" fill="#f5f5f3"/><rect x="142" y="46.4" width="20" height="1.300" fill="#f5f5f3"/><rect x="142" y="53.6" width="20" height="1.300" fill="#f5f5f3"/><rect x="142" y="60.8" width="20" height="1.300" fill="#f5f5f3"/><rect x="142" y="68.0" width="20" height="1.300" fill="#f5f5f3"/><rect x="142" y="75.2" width="20" height="1.300" fill="#f5f5f3"/><rect x="142" y="82.4" width="20" height="1.300" fill="#f5f5f3"/><rect x="142" y="89.6" width="20" height="1.300" fill="#f5f5f3"/><rect x="142" y="96.8" width="20" height="1.300" fill="#f5f5f3"/><rect x="142" y="104.0" width="20" height="1.300" fill="#f5f5f3"/><rect x="142" y="111.2" width="20" height="1.300" fill="#f5f5f3"/><rect x="142" y="118.4" width="20" height="1.300" fill="#f5f5f3"/>
<!-- column -->
<rect x="172.600" y="27.700" width="5.500" height="114" fill="#f3f3f2"/>
<rect x="178.100" y="27.700" width="3" height="114" fill="#bdbdbc"/>
<!-- right wall -->
<rect x="181" y="27.700" width="32" height="114" fill="#5b5b5b"/>
<rect x="181" y="27.700" width="32" height="30" fill="#666665"/>
<rect x="181" y="138" width="20" height="4" fill="#8a8a88"/>
<!-- plant -->
<g fill="#27421f">
<ellipse cx="198" cy="96" rx="16" ry="30"/>
<ellipse cx="188" cy="86" rx="8" ry="10"/>
<ellipse cx="204" cy="70" rx="9" ry="10"/>
<ellipse cx="190" cy="118" rx="8" ry="10"/>
</g>
<g fill="#3f6a33">
<ellipse cx="200" cy="88" rx="6" ry="5"/>
<ellipse cx="192" cy="102" rx="5" ry="4"/>
<ellipse cx="206" cy="108" rx="5" ry="6"/>
<ellipse cx="196" cy="74" rx="4" ry="3"/>
<ellipse cx="203" cy="124" rx="5" ry="4"/>
</g>
<ellipse cx="199" cy="131" rx="3" ry="2" fill="#dfe5d8"/>
<rect x="200.700" y="130" width="12" height="18" fill="#e9e9e6"/>
<!-- sofa -->
<rect x="0" y="123.500" width="30" height="14" fill="#3e3e40"/>
<rect x="0" y="116" width="3.500" height="14" fill="#4a4a4c"/>
<rect x="0" y="137" width="20" height="11" fill="#b9b9b8"/>
<rect x="44" y="95" width="17" height="10" rx="2" fill="#4a4a4a"/>
</g>
<!-- person -->
<g filter="url(#bl5b)">
<path d="M10 148 C14 134 22 116 32 110 L66 101 L104 101 L134 110 C142 116 147 134 150 148 Z" fill="#4f5a62"/>
<path d="M32 110 L66 101 L74 148 L12 148 C16 132 22 116 32 110 Z" fill="#56626a"/>
<path d="M104 101 L134 110 C142 116 147 134 150 148 L98 148 Z" fill="#444e57"/>
<path d="M66 101 L72 110 L80 148 L70 148 L60 112 Z" fill="#3b444c"/>
<path d="M104 101 L97 110 L92 148 L102 148 L110 112 Z" fill="#39424a"/>
<path d="M71 109 L97 109 L93 148 L76 148 Z" fill="#9d1d27"/>
<path d="M78 128 L90 128 L90 148 L77 148 Z" fill="#bd1f2c"/>
<path d="M72 98 L96 98 L96 110 C90 117 78 117 72 110 Z" fill="#b8917d"/>
<ellipse cx="63.500" cy="80" rx="2.600" ry="5" fill="#b98f7c"/>
<ellipse cx="102.800" cy="80" rx="2.600" ry="5" fill="#a98270"/>
<path d="M64.500 74 C63.500 54 70 47.500 83 47.500 C96 47.500 102.500 54 101.500 74 C101 92 94 105.500 83.200 105.500 C72 105.500 65 92 64.500 74 Z" fill="#c9a48f"/>
<path d="M66 72 C66 58 72 54 80 54 L80 104 C72 102 66 90 66 72 Z" fill="#d7b6a2"/>
<path d="M88 60 C96 60 101 64 101 76 C100 90 95 102 87 105 Z" fill="#b48d7a"/>
<path d="M64 71 C61.500 52 70 46 83 46 C96 46 104.500 52 102 71 C100.500 60 96 56 83 56.500 C70 56 65.500 60 64 71 Z" fill="#2f2723"/>
<ellipse cx="83" cy="99" rx="10" ry="5.500" fill="#ad8774"/>
</g>
<g filter="url(#bl5)">
<path d="M68.500 75 C71 73.300 76 73.300 79 74.500" stroke="#3a2e2a" stroke-width="1.300" fill="none"/>
<path d="M87 74.500 C90 73.300 95 73.300 97.500 75" stroke="#3a2e2a" stroke-width="1.300" fill="none"/>
<path d="M71 79 L77.500 79 M88.500 79 L95 79" stroke="#55423a" stroke-width="1.500"/>
<path d="M78 95.500 C81 94.500 85 94.500 88.500 95.500" stroke="#8d5a52" stroke-width="1.500" fill="none"/>
<path d="M80 88.500 C81.500 90 84.500 90 86 88.500" stroke="#a27864" stroke-width="1.100" fill="none"/>
<path d="M82 78 L81 88" stroke="#b8917e" stroke-width="1.200"/>
<path d="M72 109.500 C78 116 90 116 96 109.500" stroke="#e9e2da" stroke-width=".9" fill="none"/>
<g fill="#e8d8d8"><circle cx="77" cy="122" r=".6"/><circle cx="82" cy="119" r=".6"/><circle cx="88" cy="122" r=".6"/><circle cx="80" cy="127" r=".6"/><circle cx="86" cy="126" r=".6"/><circle cx="79" cy="135" r=".6"/><circle cx="89" cy="133" r=".6"/><circle cx="84" cy="140" r=".6"/></g>
</g>
</g>
</svg><div class="mic" style="right:12.500px;top:12.0px"><svg viewBox="0 0 24 24"><path fill="#fff" d="M19 11h-1.7c0 .74-.16 1.43-.43 2.05l1.23 1.23c.56-.98.9-2.090.9-3.280zm-4.020.170c0-.060.020-.110.020-.170V5c0-1.660-1.340-3-3-3S9 3.340 9 5v.180l5.980 5.990zM4.270 3L3 4.270l6.010 6.010V11c0 1.660 1.330 3 2.990 3 .220 0 .440-.030.650-.080l1.660 1.660c-.710.330-1.500.520-2.310.520-2.760 0-5.300-2.100-5.300-5.100H5c0 3.410 2.720 6.230 6 6.720V21h2v-3.280c.910-.130 1.770-.450 2.540-.9L19.730 21 21 19.730 4.270 3z"/></svg></div><div class="name" id="n_r3c5" style="top:147.67px;letter-spacing:0.876px;">Андрій Царик</div></div>
<!-- bottom bar -->
<div class="abs" id="clock" style="left:24.5px;top:690px;letter-spacing:-0.444px;">12:12</div>
<div class="abs" style="left:73px;top:692px;width:1px;height:16px;background:#9aa0a6"></div>
<div class="abs" id="mtitle" style="left:86px;top:690px;letter-spacing:0.402px;">Всеукраїнський науково-практичний семі...</div>
<div class="abs" style="left:446.5px;top:680px;width:67px;height:40px;border-radius:20px;background:#2f3134"></div>
<svg class="abs" style="left:453.50px;top:691.00px;width:18px;height:18px" viewBox="0 0 24 24"><path fill="#b4b8bb" d="M7.41 15.41L12 10.83l4.59 4.58L18 14l-6-6-6 6z" /></svg>
<div class="abs" style="left:473px;top:680px;width:40px;height:40px;border-radius:20px;background:#ea4335"></div>
<svg class="abs" style="left:483.00px;top:690.00px;width:20px;height:20px" viewBox="0 0 24 24"><path fill="#fff" d="M19 11h-1.7c0 .74-.16 1.43-.43 2.05l1.23 1.23c.56-.98.9-2.090.9-3.280zm-4.020.170c0-.060.020-.110.020-.170V5c0-1.660-1.340-3-3-3S9 3.340 9 5v.180l5.980 5.990zM4.270 3L3 4.270l6.010 6.010V11c0 1.660 1.330 3 2.990 3 .220 0 .440-.030.650-.080l1.660 1.660c-.710.330-1.500.520-2.310.520-2.760 0-5.300-2.100-5.300-5.100H5c0 3.410 2.720 6.230 6 6.720V21h2v-3.280c.910-.130 1.770-.450 2.540-.9L19.730 21 21 19.730 4.270 3z" /></svg>
<div class="abs" style="left:525px;top:680px;width:66.500px;height:40px;border-radius:20px;background:#2f3134"></div>
<svg class="abs" style="left:531.50px;top:691.00px;width:18px;height:18px" viewBox="0 0 24 24"><path fill="#b4b8bb" d="M7.41 15.41L12 10.83l4.59 4.58L18 14l-6-6-6 6z" /></svg>
<div class="abs" style="left:551.500px;top:680px;width:40px;height:40px;border-radius:20px;background:#3c4043"></div>
<svg class="abs" style="left:559.95px;top:688.75px;width:22.5px;height:22.5px" viewBox="0 0 24 24"><path fill="#fff" d="M15 8v8H5V8h10m1-2H4c-.55 0-1 .45-1 1v10c0 .55.45 1 1 1h12c.55 0 1-.45 1-1v-3.5l4 4v-11l-4 4V7c0-.55-.45-1-1-1z" stroke="#fff" stroke-width=".4"/></svg>
<div class="abs" style="left:603.2px;top:680px;width:40px;height:40px;border-radius:20px;background:#3c4043"></div>
<svg class="abs" style="left:611.20px;top:688.00px;width:24px;height:24px" viewBox="0 0 24 24"><path fill="#fff" d="M19 4H5c-1.11 0-2 .9-2 2v12c0 1.1.89 2 2 2h14c1.1 0 2-.9 2-2V6c0-1.1-.9-2-2-2zm0 14H5V6h14v12zM7 15h3c.55 0 1-.45 1-1v-1H9.5v.5h-2v-3h2v.5H11v-1c0-.55-.45-1-1-1H7c-.55 0-1 .45-1 1v4c0 .55.45 1 1 1zm7 0h3c.55 0 1-.45 1-1v-1h-1.5v.5h-2v-3h2v.5H18v-1c0-.55-.45-1-1-1h-3c-.55 0-1 .45-1 1v4c0 .55.45 1 1 1z" stroke="#fff" stroke-width=".5"/></svg>
<div class="abs" style="left:707.2px;top:680px;width:40px;height:40px;border-radius:20px;background:#3c4043"></div>
<svg class="abs" style="left:715.20px;top:688.00px;width:24px;height:24px" viewBox="0 0 24 24"><path fill="#fff" d="M21 3H3c-1.11 0-2 .89-2 2v14c0 1.11.89 2 2 2h18c1.11 0 2-.89 2-2V5c0-1.11-.89-2-2-2zm0 16.02H3V4.98h18v14.04zM10 12H8l4-4 4 4h-2v4h-4v-4z" stroke="#fff" stroke-width=".5"/></svg>
<div class="abs" style="left:811.2px;top:680px;width:40px;height:40px;border-radius:20px;background:#3c4043"></div>
<svg class="abs" style="left:819.20px;top:688.00px;width:24px;height:24px" viewBox="0 0 24 24"><path fill="#fff" d="M12 8c1.1 0 2-.9 2-2s-.9-2-2-2-2 .9-2 2 .9 2 2 2zm0 2c-1.1 0-2 .9-2 2s.9 2 2 2 2-.9 2-2-.9-2-2-2zm0 6c-1.1 0-2 .9-2 2s.9 2 2 2 2-.9 2-2-.9-2-2-2z" stroke="#fff" stroke-width=".5"/></svg>
<div class="abs" style="left:655.2px;top:680px;width:40px;height:40px;border-radius:20px;background:#3c4043"></div>
<svg class="abs" style="left:663.2px;top:688px;width:24px;height:24px" viewBox="0 0 24 24"><circle cx="12" cy="12" r="9" fill="none" stroke="#fff" stroke-width="2"/><circle cx="8.600" cy="9.600" r="1.500" fill="#fff"/><circle cx="15.400" cy="9.600" r="1.500" fill="#fff"/><path fill="#fff" d="M6.900 13.200h10.200c-.8 2.300-2.780 3.800-5.100 3.800s-4.300-1.500-5.100-3.800z"/></svg>
<div class="abs" style="left:759.2px;top:680px;width:40px;height:40px;border-radius:20px;background:#3c4043"></div>
<svg class="abs" style="left:767.45px;top:688.25px;width:23.5px;height:23.5px" viewBox="0 0 24 24"><path fill="#fff" d="M21 7c0-1.38-1.12-2.5-2.5-2.5-.17 0-.34.02-.5.05V4c0-1.38-1.12-2.5-2.5-2.5-.23 0-.46.03-.67.09C14.46.66 13.56 0 12.5 0c-1.23 0-2.25.89-2.46 2.06C9.87 2.02 9.69 2 9.5 2 8.12 2 7 3.12 7 4.5v5.89c-.34-.31-.76-.54-1.22-.66L5.01 9.5c-.83-.23-1.7.09-2.19.83-.38.57-.4 1.31-.15 1.95l2.56 6.43C6.49 21.91 9.57 24 13 24c4.42 0 8-3.58 8-8V7zm-2 9c0 3.31-2.69 6-6 6-2.61 0-4.950-1.590-5.910-4.010l-2.600-6.540.530.140c.460.120.830.460 1 .9L7 15h2V4.500c0-.280.220-.5.5-.5s.5.220.5.5V12h2V2.500c0-.280.220-.5.5-.5s.5.220.5.5V12h2V4c0-.280.220-.5.5-.5s.5.220.5.5v8h2V7c0-.280.220-.5.5-.5s.5.220.5.5v9z" stroke="#fff" stroke-width=".4"/></svg>
<div class="abs" style="left:863px;top:680px;width:56px;height:40px;border-radius:20px;background:#ea4335"></div>
<svg class="abs" style="left:879.00px;top:688.50px;width:24px;height:24px" viewBox="0 0 24 24"><path fill="#fff" d="M12 9c-1.6 0-3.15.25-4.6.72v3.1c0 .39-.23.74-.56.9-.98.49-1.87 1.12-2.66 1.85-.18.18-.43.28-.7.28-.28 0-.53-.11-.71-.29L.29 13.08c-.18-.17-.29-.42-.29-.7 0-.28.11-.53.29-.71C3.34 8.78 7.46 7 12 7s8.66 1.78 11.71 4.67c.18.18.29.43.29.71 0 .28-.11.53-.29.71l-2.48 2.48c-.18.18-.43.29-.71.29-.27 0-.52-.11-.7-.28-.79-.74-1.69-1.36-2.67-1.85-.33-.16-.56-.5-.56-.9v-3.1C15.15 9.25 13.6 9 12 9z" /></svg>
<svg class="abs" style="left:1173.75px;top:687.75px;width:24.5px;height:24.5px" viewBox="0 0 24 24"><path fill="#fff" d="M11 7h2v2h-2zm0 4h2v6h-2zm1-9C6.48 2 2 6.48 2 12s4.48 10 10 10 10-4.48 10-10S17.52 2 12 2zm0 18c-4.41 0-8-3.59-8-8s3.59-8 8-8 8 3.59 8 8-3.59 8-8 8z" stroke="#fff" stroke-width=".7"/></svg>
<svg class="abs" style="left:1220.80px;top:686.50px;width:27px;height:27px" viewBox="0 0 24 24"><path fill="#fff" d="M9 13.75c-2.34 0-7 1.17-7 3.5V19h14v-1.75c0-2.33-4.66-3.5-7-3.5zM4.34 17c.84-.58 2.87-1.25 4.66-1.25s3.82.67 4.66 1.25H4.34zM9 12c1.93 0 3.5-1.57 3.5-3.5S10.93 5 9 5 5.5 6.57 5.5 8.5 7.07 12 9 12zm0-5c.83 0 1.5.67 1.5 1.5S9.83 10 9 10s-1.5-.67-1.5-1.5S8.17 7 9 7zm7.04 6.81c1.16.84 1.96 1.96 1.96 3.44V19h4v-1.75c0-2.02-3.5-3.17-5.96-3.44zM15 12c1.93 0 3.5-1.57 3.5-3.5S16.93 5 15 5c-.54 0-1.04.13-1.5.35.63.89 1 1.98 1 3.15s-.37 2.26-1 3.15c.46.22.96.35 1.5.35z" stroke="#fff" stroke-width=".5"/></svg>
<svg class="abs" style="left:1269.75px;top:687.75px;width:24.5px;height:24.5px" viewBox="0 0 24 24"><path fill="#fff" d="M4 4h16v12H5.17L4 17.17V4m0-2c-1.1 0-1.99.9-1.990 2L2 22l4-4h14c1.1 0 2-.9 2-2V4c0-1.1-.9-2-2-2H4zm2 10h8v2H6v-2zm0-3h12v2H6V9zm0-3h12v2H6V6z" stroke="#fff" stroke-width=".7"/></svg>
<svg class="abs" style="left:1317.75px;top:687.75px;width:24.5px;height:24.5px" viewBox="0 0 24 24"><path fill="#fff" d="M12 2l-5.5 9h11L12 2zm0 3.84L13.93 9h-3.87L12 5.840zM17.500 13c-2.490 0-4.500 2.010-4.500 4.500s2.010 4.500 4.500 4.500 4.500-2.010 4.500-4.500-2.010-4.500-4.500-4.500zm0 7c-1.380 0-2.500-1.120-2.500-2.500s1.120-2.500 2.500-2.500 2.500 1.120 2.500 2.500-1.120 2.500-2.500 2.500zM3 21.500h8v-8H3v8zm2-6h4v4H5v-4z" stroke="#fff" stroke-width=".7"/></svg>
<div class="abs" id="badge" style="left:1235px;top:667px;width:26.300px;height:20px;border-radius:10px;background:#5f6368;color:#fff;font-size:12px;line-height:20px;text-align:center">17</div>
<!-- taskbar -->

<div id="task"></div>
<div class="abs" style="left:0;top:740px;width:1366px;height:1.500px;background:#fff"></div>
<div class="abs" style="left:3px;top:744.500px;width:50px;height:21px;background:#f0f0f0;border:1px solid;border-color:#fff #555 #555 #fff;box-shadow:inset -1px -1px 0 #a0a0a0"></div>
<svg class="abs" style="left:4.300px;top:746px;width:16.500px;height:15.500px" viewBox="-1 0 15 14"><path d="M1.200 2.600C3 1.600 5 1.600 6.600 2.600L5.600 6.800C4 5.800 2 5.800.2 6.800Z" fill="#e5562a"/><path d="M7.600 2.900C9.400 3.900 11.400 3.900 13.200 2.900L12.200 7.100C10.400 8.100 8.400 8.100 6.600 7.100Z" fill="#7bb62c"/><path d="M0 7.800C1.800 6.800 3.800 6.800 5.400 7.800L4.400 12C2.800 11 .8 11-1 12Z" fill="#2f8fdb"/><path d="M6.400 8.100C8.200 9.100 10.200 9.100 12 8.100L11 12.300C9.200 13.300 7.200 13.300 5.400 12.300Z" fill="#f6b91c"/></svg>
<div class="abs" id="pusk" style="left:21px;top:747px;font-size:12px;line-height:16px;font-weight:700;color:#000;letter-spacing:0.204px;">Пуск</div>
<!-- quick launch -->
<svg class="abs" style="left:70px;top:747px;width:16px;height:16px" viewBox="0 0 16 16"><rect x=".5" y=".5" width="15" height="15" rx="2.500" fill="#8ccbf4" stroke="#4a9be0"/><circle cx="8" cy="8" r="5.400" fill="#1f6fc0"/><path d="M6.200 3.400C8 6 8 10 6.200 12.600M9.800 3.400C8 6 8 10 9.800 12.600" stroke="#0e2f55" stroke-width="1.300" fill="none"/></svg>
<svg class="abs" style="left:104px;top:747px;width:16px;height:16px" viewBox="0 0 16 16"><rect x=".6" y=".6" width="14.800" height="14.800" fill="#cfe3f6" stroke="#2f7fd0" stroke-width="1.200"/><circle cx="8" cy="8" r="5.300" fill="#f28a1e"/><path d="M6.300 5.200L11 8L6.300 10.800Z" fill="#fff"/></svg>
<svg class="abs" style="left:137.500px;top:746.500px;width:16px;height:17px" viewBox="0 0 16 17"><ellipse cx="8" cy="8.500" rx="7.600" ry="8.100" fill="#e0202a"/><ellipse cx="8" cy="8.500" rx="3.300" ry="5.700" fill="#f4f0f0"/></svg>
<svg class="abs" style="left:171px;top:747px;width:17px;height:16px" viewBox="0 0 17 16"><path d="M1 2.500h5l1.500 1.700H16V13H1Z" fill="#e8b93c"/><rect x="1.600" y="5" width="14" height="8.500" fill="#f8dc7a"/><path d="M4 9h9.500v5.500H4Z" fill="#4a9fe0"/><path d="M5.500 10.500h6.500v4H5.500Z" fill="#bfe0f8"/></svg>
<svg class="abs" style="left:206px;top:747px;width:16px;height:16px" viewBox="0 0 16 16"><defs><linearGradient id="avg" x1="0" y1="0" x2="1" y2="1"><stop offset="0" stop-color="#f7a81c"/><stop offset=".55" stop-color="#f08a1c"/><stop offset="1" stop-color="#6a3fc0"/></linearGradient></defs><circle cx="8" cy="8" r="7.800" fill="url(#avg)"/><path d="M8 3.200L12 4.800V8.500C12 10.800 10.300 12.400 8 13.200C5.700 12.400 4 10.800 4 8.500V4.800Z" fill="#fff"/><circle cx="8" cy="7.400" r="1.500" fill="#3a2a6a"/><rect x="7.300" y="7.800" width="1.400" height="3" fill="#3a2a6a"/></svg>
<svg class="abs" style="left:239.5px;top:747px;width:16px;height:16px" viewBox="-8 -8 16 16">
<circle r="8" fill="#fbc116"/>
<path d="M0 0 L-6.930 -4 A8 8 0 0 1 6.930 -4 Z" fill="#e33b2e"/>
<path d="M0 0 L6.930 -4 L-6.930 -4 Z" fill="#e33b2e"/>
<path d="M0 0 L-6.930 -4 A8 8 0 0 0 0 8 L3.460 2 Z" fill="#2da94f"/>
<path d="M-6.930 -4 L-3.460 2 L0 8 L3.460 2 L0 0 Z" fill="#2da94f"/>
<path d="M6.930 -4 L0 -4 L3.460 2 L0 8 A8 8 0 0 0 6.930 -4 Z" fill="#fbc116"/>
<circle r="3.700" fill="#fff"/>
<circle r="2.900" fill="#4285f4"/>
</svg>
<svg class="abs" style="left:248px;top:755px;width:9px;height:9px" viewBox="0 0 9 9"><circle cx="4.500" cy="4.500" r="4.300" fill="#9fb6e0"/><circle cx="4.500" cy="3.400" r="1.500" fill="#3a4a7a"/><path d="M1.800 7.600C2.200 5.600 6.800 5.600 7.200 7.600Z" fill="#3a4a7a"/></svg>
<svg class="abs" style="left:274px;top:747px;width:16px;height:16px" viewBox="-8 -8 16 16">
<circle r="8" fill="#fbc116"/>
<path d="M0 0 L-6.930 -4 A8 8 0 0 1 6.930 -4 Z" fill="#e33b2e"/>
<path d="M0 0 L6.930 -4 L-6.930 -4 Z" fill="#e33b2e"/>
<path d="M0 0 L-6.930 -4 A8 8 0 0 0 0 8 L3.460 2 Z" fill="#2da94f"/>
<path d="M-6.930 -4 L-3.460 2 L0 8 L3.460 2 L0 0 Z" fill="#2da94f"/>
<path d="M6.930 -4 L0 -4 L3.460 2 L0 8 A8 8 0 0 0 6.930 -4 Z" fill="#fbc116"/>
<circle r="3.700" fill="#fff"/>
<circle r="2.900" fill="#4285f4"/>
</svg>
<div class="abs" style="left:300px;top:744px;width:31px;height:22px;background:#fafafa;border:1px solid;border-color:#555 #fff #fff #555;box-shadow:inset 1px 1px 0 #a0a0a0"></div>
<svg class="abs" style="left:307.5px;top:747px;width:16px;height:16px" viewBox="-8 -8 16 16">
<circle r="8" fill="#fbc116"/>
<path d="M0 0 L-6.930 -4 A8 8 0 0 1 6.930 -4 Z" fill="#e33b2e"/>
<path d="M0 0 L6.930 -4 L-6.930 -4 Z" fill="#e33b2e"/>
<path d="M0 0 L-6.930 -4 A8 8 0 0 0 0 8 L3.460 2 Z" fill="#2da94f"/>
<path d="M-6.930 -4 L-3.460 2 L0 8 L3.460 2 L0 0 Z" fill="#2da94f"/>
<path d="M6.930 -4 L0 -4 L3.460 2 L0 8 A8 8 0 0 0 6.930 -4 Z" fill="#fbc116"/>
<circle r="3.700" fill="#fff"/>
<circle r="2.900" fill="#4285f4"/>
</svg>
<svg class="abs" style="left:317px;top:755.500px;width:9px;height:9px" viewBox="0 0 9 9"><circle cx="4.500" cy="4.500" r="4.300" fill="#4a3a34"/><circle cx="4.500" cy="3.600" r="1.700" fill="#c59b86"/><path d="M1.600 8C2 5.800 7 5.800 7.400 8Z" fill="#2b3b82"/></svg>
<!-- tray -->
<div class="abs" id="uk" style="left:1160.500px;top:747px;font-size:12px;line-height:16px;color:#111;letter-spacing:-0.572px;">UK</div>
<svg class="abs" style="left:1188px;top:747.500px;width:17px;height:14px" viewBox="0 0 17 14"><path d="M7 5C7 2.500 10 3.800 12.500 1" stroke="#8a8a8a" stroke-width="1.200" fill="none"/><rect x=".8" y="5" width="15.400" height="8.200" rx="1.300" fill="#e4e4e4" stroke="#7a7a7a" stroke-width="1.100"/><path d="M3 7.500h11M3 9.300h11M4.500 11.200h8" stroke="#8a8a8a" stroke-width="1" stroke-dasharray="1.300 .7"/></svg>
<div class="abs" style="left:1211px;top:744px;width:156px;height:25px;background:#f7f7f7;border:1px solid #8e8e8e;border-right:0;border-bottom:0"></div>
<svg class="abs" style="left:1216.500px;top:749px;width:8px;height:9px" viewBox="0 0 8 9"><path d="M1 4L4 1.200L7 4M1 8L4 5.200L7 8" stroke="#111" stroke-width="1.500" fill="none"/></svg>
<svg class="abs" style="left:1234px;top:746.500px;width:15px;height:16px" viewBox="0 0 15 16"><rect x="1" y="3.500" width="8" height="11.500" rx="1.200" fill="#f2f2f2" stroke="#6a6a6a" stroke-width="1.100"/><rect x="3.500" y="1.500" width="3" height="2" fill="#6a6a6a"/><path d="M7.500 4.500h6.500v3.500c0 1.500-1 2.600-2.500 2.600h-1.500C8.500 10.600 7.500 9.500 7.500 8Z" fill="#fff" stroke="#5a5a5a" stroke-width="1.100"/><path d="M9.300 1.500v3M12.200 1.500v3M10.750 10.600V15.500" stroke="#5a5a5a" stroke-width="1.200"/></svg>
<svg class="abs" style="left:1257px;top:747px;width:18px;height:16px" viewBox="0 0 18 16"><path d="M1 5.500h2.500L7.500 1.500v12.500L3.500 10H1Z" fill="#cfcfcf" stroke="#7a7a7a" stroke-width="1"/><circle cx="12.300" cy="10.800" r="3.700" fill="#fff" stroke="#e0141c" stroke-width="1.700"/><path d="M9.800 8.300L14.800 13.300" stroke="#e0141c" stroke-width="1.700"/></svg>
<svg class="abs" style="left:1282px;top:748px;width:17px;height:13px" viewBox="0 0 17 13"><g fill="#d2d2d2" stroke="#8a8a8a" stroke-width=".9"><rect x=".6" y="9.400" width="2.400" height="2.800"/><rect x="3.900" y="7.200" width="2.400" height="5"/><rect x="7.200" y="4.800" width="2.400" height="7.400"/><rect x="10.500" y="2.600" width="2.400" height="9.600"/><rect x="13.800" y=".6" width="2.400" height="11.600"/></g></svg>
<div class="abs" id="tclock" style="left:1311.500px;top:747px;font-size:12px;line-height:16px;color:#111;letter-spacing:-0.608px;">12:12</div>
<svg class="abs" style="left:1346.500px;top:749.500px;width:15px;height:12px" viewBox="0 0 15 12"><rect x=".5" y=".5" width="14" height="10.500" fill="#2f74c8" stroke="#9fc0e8"/><rect x="1" y="8.400" width="13" height="2.600" fill="#1c2a4a"/><rect x="1.600" y="9" width="2" height="1.400" fill="#7fb0e8"/></svg>

</div>
</body>
</html>
